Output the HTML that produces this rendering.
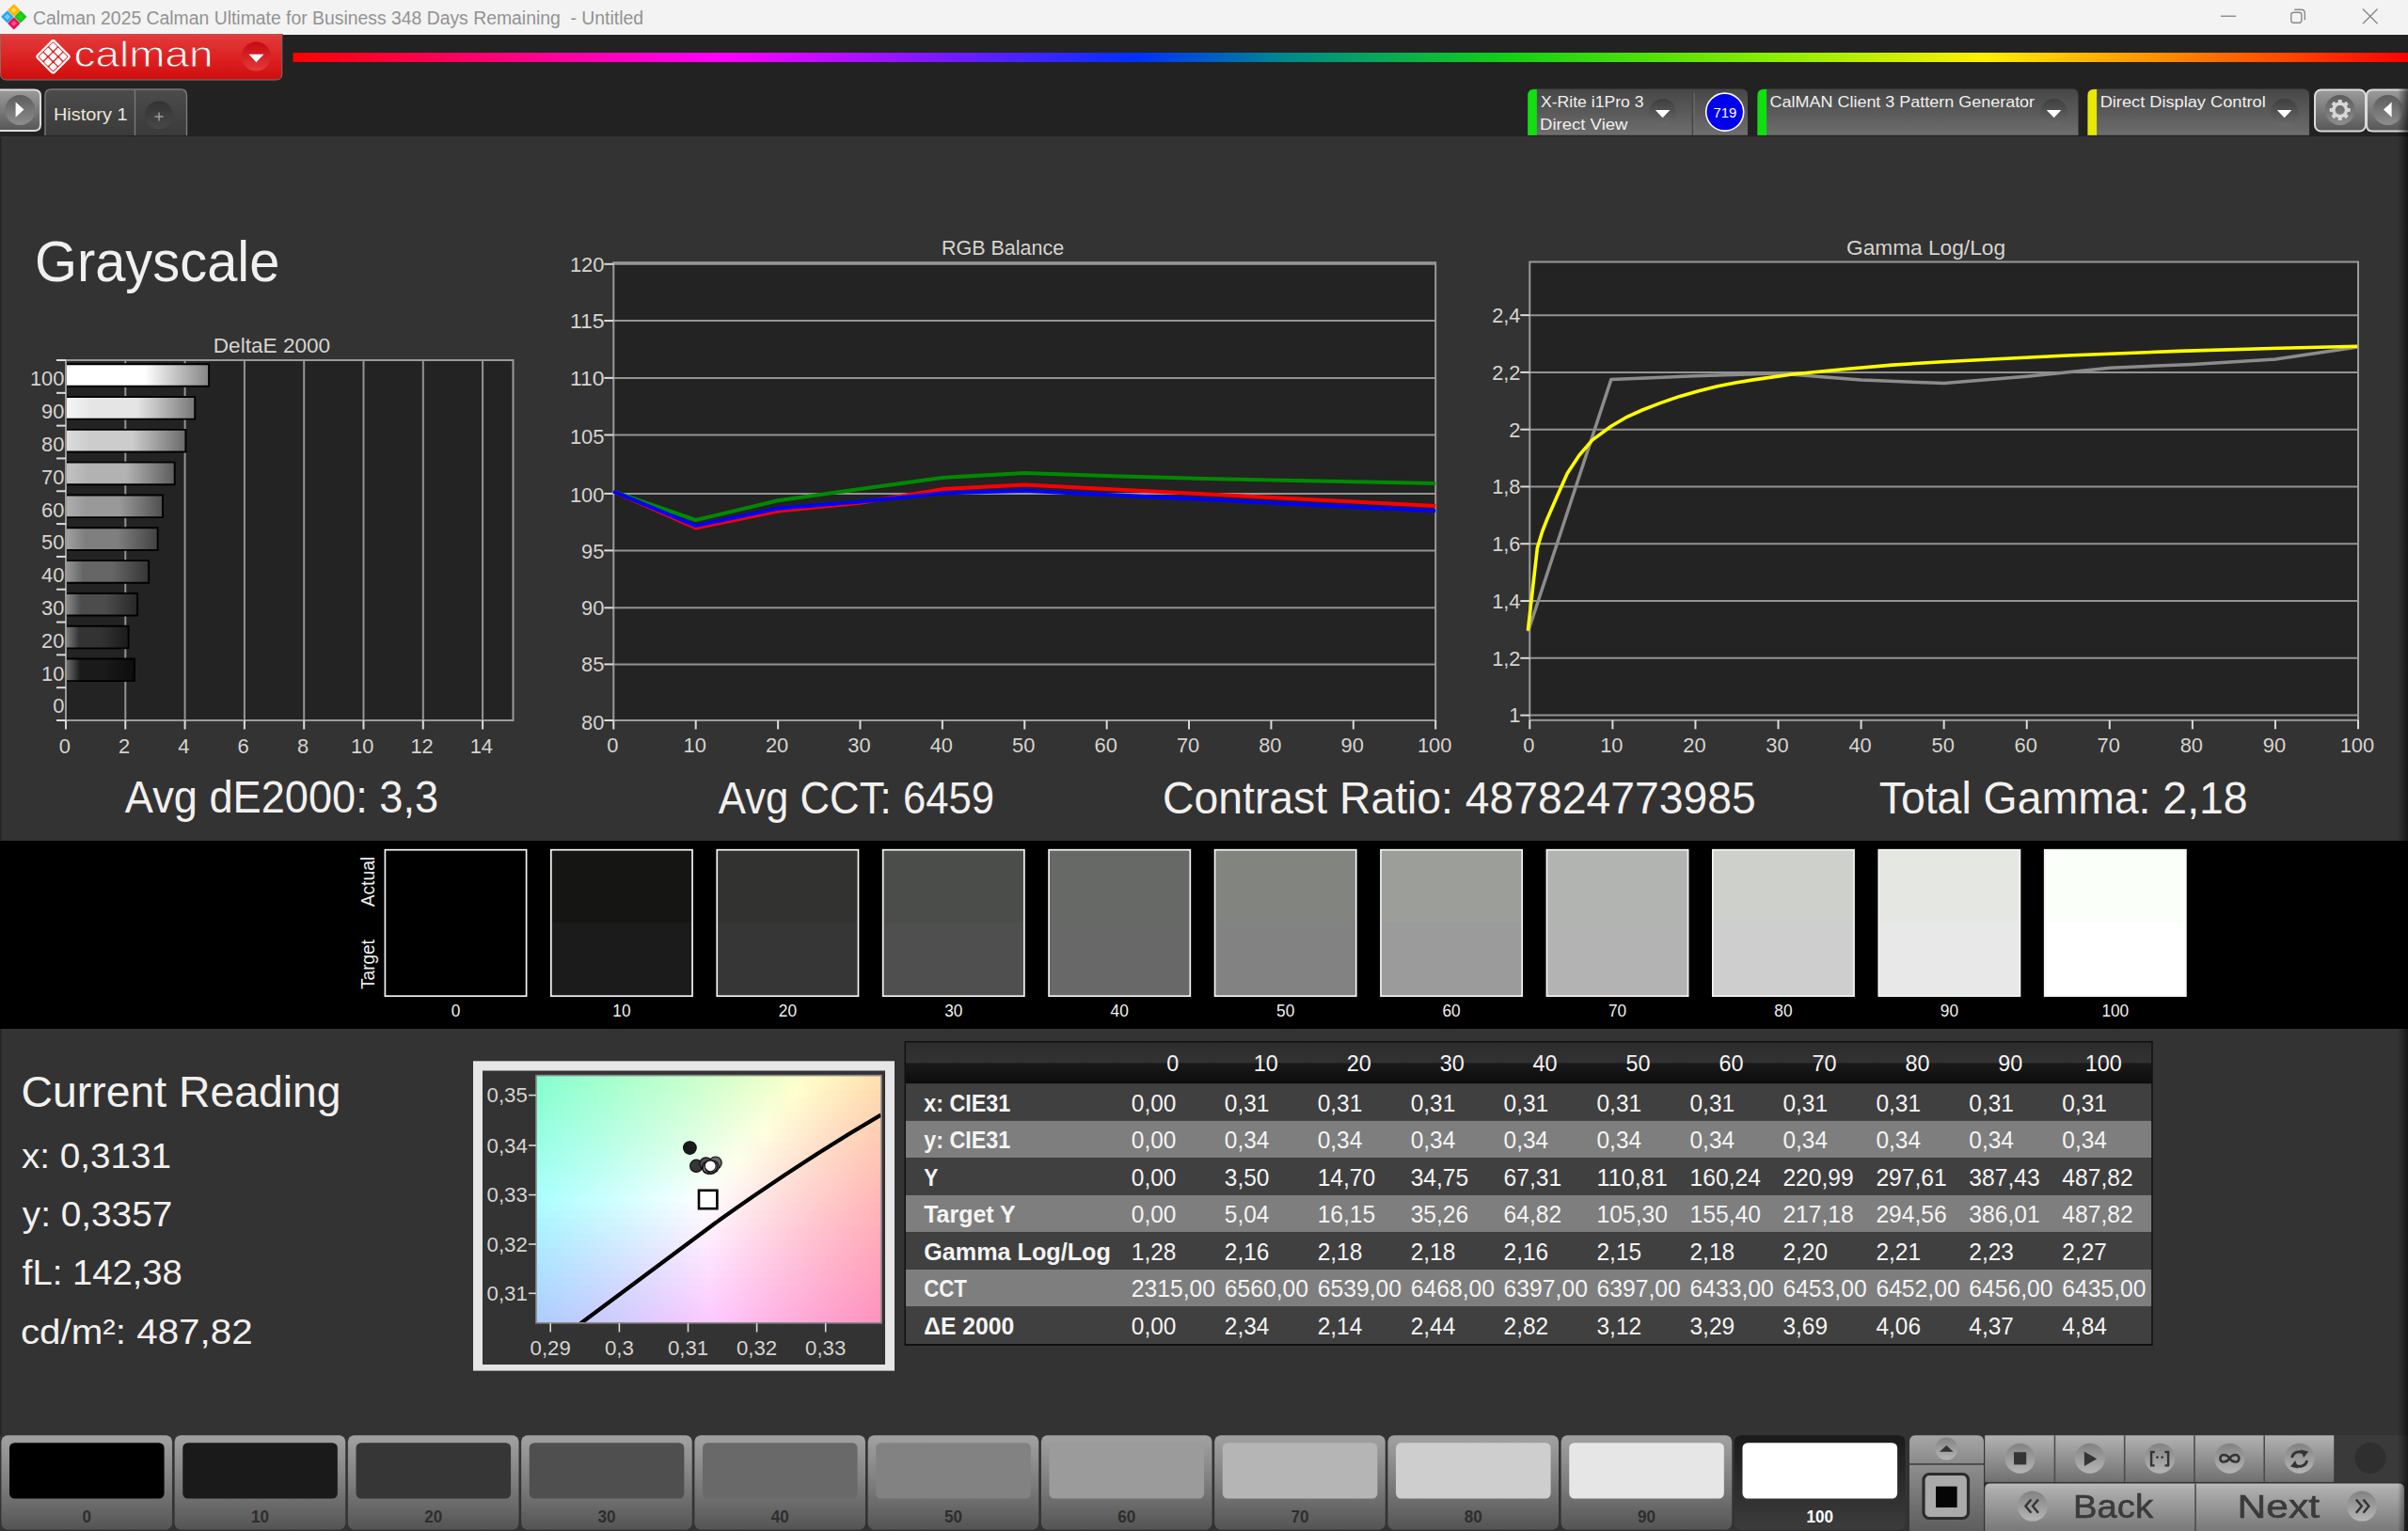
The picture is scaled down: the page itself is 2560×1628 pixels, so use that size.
<!DOCTYPE html>
<html lang="en">
<head>
<meta charset="utf-8">
<title>Calman 2025 Calman Ultimate for Business - Untitled</title>
<style>
html,body{margin:0;padding:0;background:#333;}
body{width:2560px;height:1628px;overflow:hidden;position:relative;font-family:"Liberation Sans",sans-serif;}
#app{position:absolute;left:0;top:0;width:2560px;height:1628px;overflow:hidden;background:#333;}
.sec{position:absolute;left:0;width:2560px;}
#titlebar{top:0;height:37px;background:#f3f3f3;}
#header{top:37px;height:107.9px;background:#222;}
#content{top:144.9px;height:749px;background:#333;}
#strip{top:893.6px;height:200.6px;background:#000;}
#lower{top:1094px;height:534px;background:#333;}
#overlay{position:absolute;left:0;top:0;}
#overlay text{font-family:"Liberation Sans",sans-serif;white-space:pre;}
</style>
</head>
<body>
<div id="app">
<div class="sec" id="titlebar"></div>
<div class="sec" id="header"></div>
<div class="sec" id="content"></div>
<div class="sec" id="strip"></div>
<div class="sec" id="lower"></div>
<svg id="overlay" width="2560" height="1628" viewBox="0 0 2560 1628">
<defs>
<linearGradient id="gRed" x1="0" y1="0" x2="0" y2="1"><stop offset="0" stop-color="#e23b3b"/><stop offset="0.5" stop-color="#dd2222"/><stop offset="1" stop-color="#cf0d0d"/></linearGradient>
<linearGradient id="gRedC" x1="0" y1="0" x2="0" y2="1"><stop offset="0" stop-color="#c40a12"/><stop offset="1" stop-color="#e63a3a"/></linearGradient>
<linearGradient id="gRain" gradientUnits="userSpaceOnUse" x1="311" y1="0" x2="2560" y2="0"><stop offset="0" stop-color="#ff0000"/><stop offset="0.205" stop-color="#ff00ff"/><stop offset="0.399" stop-color="#0030ff"/><stop offset="0.47" stop-color="#008a8a"/><stop offset="0.576" stop-color="#14d014"/><stop offset="0.70" stop-color="#8aee00"/><stop offset="0.80" stop-color="#ffef00"/><stop offset="0.90" stop-color="#ff7a00"/><stop offset="1" stop-color="#ff0000"/></linearGradient>
<linearGradient id="gBtn" x1="0" y1="0" x2="0" y2="1"><stop offset="0" stop-color="#9c9c9c"/><stop offset="1" stop-color="#575757"/></linearGradient>
<linearGradient id="gBtnC" x1="0" y1="0" x2="0" y2="1"><stop offset="0" stop-color="#5c5c5c"/><stop offset="1" stop-color="#8e8e8e"/></linearGradient>
<linearGradient id="gTab" x1="0" y1="0" x2="0" y2="1"><stop offset="0" stop-color="#4c4c4c"/><stop offset="1" stop-color="#3a3a3a"/></linearGradient>
<linearGradient id="gPlusC" x1="0" y1="0" x2="0" y2="1"><stop offset="0" stop-color="#333"/><stop offset="1" stop-color="#484848"/></linearGradient>
<linearGradient id="gPanel" x1="0" y1="0" x2="0" y2="1"><stop offset="0" stop-color="#464646"/><stop offset="1" stop-color="#6e6e6e"/></linearGradient>
<linearGradient id="gDrop" x1="0" y1="0" x2="0" y2="1"><stop offset="0" stop-color="#3e3e3e"/><stop offset="1" stop-color="#6a6a6a"/></linearGradient>
<linearGradient id="gBar100" x1="0" y1="0" x2="1" y2="0"><stop offset="0" stop-color="rgb(255,255,255)"/><stop offset="0.2" stop-color="rgb(255,255,255)"/><stop offset="0.55" stop-color="rgb(255,255,255)"/><stop offset="1" stop-color="rgb(132,132,132)"/></linearGradient>
<linearGradient id="gBar90" x1="0" y1="0" x2="1" y2="0"><stop offset="0" stop-color="rgb(245,245,245)"/><stop offset="0.2" stop-color="rgb(229,229,229)"/><stop offset="0.55" stop-color="rgb(229,229,229)"/><stop offset="1" stop-color="rgb(119,119,119)"/></linearGradient>
<linearGradient id="gBar80" x1="0" y1="0" x2="1" y2="0"><stop offset="0" stop-color="rgb(220,220,220)"/><stop offset="0.2" stop-color="rgb(204,204,204)"/><stop offset="0.55" stop-color="rgb(204,204,204)"/><stop offset="1" stop-color="rgb(106,106,106)"/></linearGradient>
<linearGradient id="gBar70" x1="0" y1="0" x2="1" y2="0"><stop offset="0" stop-color="rgb(194,194,194)"/><stop offset="0.2" stop-color="rgb(178,178,178)"/><stop offset="0.55" stop-color="rgb(178,178,178)"/><stop offset="1" stop-color="rgb(92,92,92)"/></linearGradient>
<linearGradient id="gBar60" x1="0" y1="0" x2="1" y2="0"><stop offset="0" stop-color="rgb(174,174,174)"/><stop offset="0.2" stop-color="rgb(153,153,153)"/><stop offset="0.55" stop-color="rgb(153,153,153)"/><stop offset="1" stop-color="rgb(79,79,79)"/></linearGradient>
<linearGradient id="gBar50" x1="0" y1="0" x2="1" y2="0"><stop offset="0" stop-color="rgb(161,161,161)"/><stop offset="0.2" stop-color="rgb(127,127,127)"/><stop offset="0.55" stop-color="rgb(127,127,127)"/><stop offset="1" stop-color="rgb(66,66,66)"/></linearGradient>
<linearGradient id="gBar40" x1="0" y1="0" x2="1" y2="0"><stop offset="0" stop-color="rgb(149,149,149)"/><stop offset="0.2" stop-color="rgb(102,102,102)"/><stop offset="0.55" stop-color="rgb(102,102,102)"/><stop offset="1" stop-color="rgb(53,53,53)"/></linearGradient>
<linearGradient id="gBar30" x1="0" y1="0" x2="1" y2="0"><stop offset="0" stop-color="rgb(136,136,136)"/><stop offset="0.2" stop-color="rgb(76,76,76)"/><stop offset="0.55" stop-color="rgb(76,76,76)"/><stop offset="1" stop-color="rgb(39,39,39)"/></linearGradient>
<linearGradient id="gBar20" x1="0" y1="0" x2="1" y2="0"><stop offset="0" stop-color="rgb(123,123,123)"/><stop offset="0.2" stop-color="rgb(51,51,51)"/><stop offset="0.55" stop-color="rgb(51,51,51)"/><stop offset="1" stop-color="rgb(26,26,26)"/></linearGradient>
<linearGradient id="gBar10" x1="0" y1="0" x2="1" y2="0"><stop offset="0" stop-color="rgb(111,111,111)"/><stop offset="0.2" stop-color="rgb(26,26,26)"/><stop offset="0.55" stop-color="rgb(26,26,26)"/><stop offset="1" stop-color="rgb(12,12,12)"/></linearGradient>
<clipPath id="cieClip"><rect x="570.0" y="1143.6" width="367.0" height="263.20000000000005"/></clipPath>
<linearGradient id="cr0"><stop offset="0.000" stop-color="#87ffcf"/><stop offset="0.083" stop-color="#92ffce"/><stop offset="0.167" stop-color="#9effce"/><stop offset="0.250" stop-color="#aaffcd"/><stop offset="0.333" stop-color="#b7ffcd"/><stop offset="0.417" stop-color="#c3ffcc"/><stop offset="0.500" stop-color="#d0ffcc"/><stop offset="0.583" stop-color="#ddffcb"/><stop offset="0.667" stop-color="#ebffca"/><stop offset="0.750" stop-color="#f9ffca"/><stop offset="0.833" stop-color="#fff7c3"/><stop offset="0.917" stop-color="#ffebb8"/><stop offset="1.000" stop-color="#ffdfaf"/></linearGradient>
<linearGradient id="cr1"><stop offset="0.000" stop-color="#89ffd1"/><stop offset="0.083" stop-color="#95ffd1"/><stop offset="0.167" stop-color="#a0ffd0"/><stop offset="0.250" stop-color="#adffd0"/><stop offset="0.333" stop-color="#b9ffcf"/><stop offset="0.417" stop-color="#c6ffcf"/><stop offset="0.500" stop-color="#d3ffce"/><stop offset="0.583" stop-color="#e0ffce"/><stop offset="0.667" stop-color="#eeffcd"/><stop offset="0.750" stop-color="#fcffcd"/><stop offset="0.833" stop-color="#fff4c4"/><stop offset="0.917" stop-color="#ffe8b9"/><stop offset="1.000" stop-color="#ffdcaf"/></linearGradient>
<linearGradient id="cr2"><stop offset="0.000" stop-color="#8bffd4"/><stop offset="0.083" stop-color="#97ffd4"/><stop offset="0.167" stop-color="#a3ffd3"/><stop offset="0.250" stop-color="#afffd3"/><stop offset="0.333" stop-color="#bcffd2"/><stop offset="0.417" stop-color="#c8ffd2"/><stop offset="0.500" stop-color="#d6ffd1"/><stop offset="0.583" stop-color="#e3ffd1"/><stop offset="0.667" stop-color="#f1ffd0"/><stop offset="0.750" stop-color="#ffffd0"/><stop offset="0.833" stop-color="#fff1c4"/><stop offset="0.917" stop-color="#ffe5b9"/><stop offset="1.000" stop-color="#ffd9b0"/></linearGradient>
<linearGradient id="cr3"><stop offset="0.000" stop-color="#8dffd7"/><stop offset="0.083" stop-color="#99ffd6"/><stop offset="0.167" stop-color="#a5ffd6"/><stop offset="0.250" stop-color="#b1ffd6"/><stop offset="0.333" stop-color="#beffd5"/><stop offset="0.417" stop-color="#cbffd5"/><stop offset="0.500" stop-color="#d8ffd4"/><stop offset="0.583" stop-color="#e6ffd4"/><stop offset="0.667" stop-color="#f4ffd3"/><stop offset="0.750" stop-color="#fffcd0"/><stop offset="0.833" stop-color="#ffefc5"/><stop offset="0.917" stop-color="#ffe2ba"/><stop offset="1.000" stop-color="#ffd7b0"/></linearGradient>
<linearGradient id="cr4"><stop offset="0.000" stop-color="#8fffda"/><stop offset="0.083" stop-color="#9bffd9"/><stop offset="0.167" stop-color="#a7ffd9"/><stop offset="0.250" stop-color="#b4ffd8"/><stop offset="0.333" stop-color="#c1ffd8"/><stop offset="0.417" stop-color="#ceffd8"/><stop offset="0.500" stop-color="#dbffd7"/><stop offset="0.583" stop-color="#e9ffd7"/><stop offset="0.667" stop-color="#f7ffd6"/><stop offset="0.750" stop-color="#fff9d1"/><stop offset="0.833" stop-color="#ffecc5"/><stop offset="0.917" stop-color="#ffdfbb"/><stop offset="1.000" stop-color="#ffd4b1"/></linearGradient>
<linearGradient id="cr5"><stop offset="0.000" stop-color="#91ffdc"/><stop offset="0.083" stop-color="#9dffdc"/><stop offset="0.167" stop-color="#aaffdc"/><stop offset="0.250" stop-color="#b6ffdb"/><stop offset="0.333" stop-color="#c3ffdb"/><stop offset="0.417" stop-color="#d0ffdb"/><stop offset="0.500" stop-color="#deffda"/><stop offset="0.583" stop-color="#ecffda"/><stop offset="0.667" stop-color="#faffd9"/><stop offset="0.750" stop-color="#fff6d1"/><stop offset="0.833" stop-color="#ffe9c6"/><stop offset="0.917" stop-color="#ffddbb"/><stop offset="1.000" stop-color="#ffd2b1"/></linearGradient>
<linearGradient id="cr6"><stop offset="0.000" stop-color="#93ffdf"/><stop offset="0.083" stop-color="#9fffdf"/><stop offset="0.167" stop-color="#acffdf"/><stop offset="0.250" stop-color="#b9ffde"/><stop offset="0.333" stop-color="#c6ffde"/><stop offset="0.417" stop-color="#d3ffde"/><stop offset="0.500" stop-color="#e1ffdd"/><stop offset="0.583" stop-color="#efffdd"/><stop offset="0.667" stop-color="#fdffdd"/><stop offset="0.750" stop-color="#fff3d2"/><stop offset="0.833" stop-color="#ffe6c6"/><stop offset="0.917" stop-color="#ffdabb"/><stop offset="1.000" stop-color="#ffcfb2"/></linearGradient>
<linearGradient id="cr7"><stop offset="0.000" stop-color="#95ffe2"/><stop offset="0.083" stop-color="#a2ffe2"/><stop offset="0.167" stop-color="#aeffe2"/><stop offset="0.250" stop-color="#bbffe1"/><stop offset="0.333" stop-color="#c8ffe1"/><stop offset="0.417" stop-color="#d6ffe1"/><stop offset="0.500" stop-color="#e4ffe0"/><stop offset="0.583" stop-color="#f2ffe0"/><stop offset="0.667" stop-color="#fffedf"/><stop offset="0.750" stop-color="#fff0d2"/><stop offset="0.833" stop-color="#ffe3c7"/><stop offset="0.917" stop-color="#ffd7bc"/><stop offset="1.000" stop-color="#ffccb2"/></linearGradient>
<linearGradient id="cr8"><stop offset="0.000" stop-color="#97ffe5"/><stop offset="0.083" stop-color="#a4ffe5"/><stop offset="0.167" stop-color="#b1ffe5"/><stop offset="0.250" stop-color="#beffe4"/><stop offset="0.333" stop-color="#cbffe4"/><stop offset="0.417" stop-color="#d9ffe4"/><stop offset="0.500" stop-color="#e7ffe4"/><stop offset="0.583" stop-color="#f5ffe3"/><stop offset="0.667" stop-color="#fffbdf"/><stop offset="0.750" stop-color="#ffedd3"/><stop offset="0.833" stop-color="#ffe0c7"/><stop offset="0.917" stop-color="#ffd5bc"/><stop offset="1.000" stop-color="#ffcab3"/></linearGradient>
<linearGradient id="cr9"><stop offset="0.000" stop-color="#9affe8"/><stop offset="0.083" stop-color="#a6ffe8"/><stop offset="0.167" stop-color="#b3ffe8"/><stop offset="0.250" stop-color="#c0ffe8"/><stop offset="0.333" stop-color="#ceffe7"/><stop offset="0.417" stop-color="#dbffe7"/><stop offset="0.500" stop-color="#eaffe7"/><stop offset="0.583" stop-color="#f8ffe7"/><stop offset="0.667" stop-color="#fff7df"/><stop offset="0.750" stop-color="#ffead3"/><stop offset="0.833" stop-color="#ffddc7"/><stop offset="0.917" stop-color="#ffd2bd"/><stop offset="1.000" stop-color="#ffc7b3"/></linearGradient>
<linearGradient id="cr10"><stop offset="0.000" stop-color="#9cffeb"/><stop offset="0.083" stop-color="#a9ffeb"/><stop offset="0.167" stop-color="#b6ffeb"/><stop offset="0.250" stop-color="#c3ffeb"/><stop offset="0.333" stop-color="#d0ffeb"/><stop offset="0.417" stop-color="#deffea"/><stop offset="0.500" stop-color="#edffea"/><stop offset="0.583" stop-color="#fbffea"/><stop offset="0.667" stop-color="#fff4e0"/><stop offset="0.750" stop-color="#ffe7d3"/><stop offset="0.833" stop-color="#ffdbc8"/><stop offset="0.917" stop-color="#ffcfbd"/><stop offset="1.000" stop-color="#ffc5b4"/></linearGradient>
<linearGradient id="cr11"><stop offset="0.000" stop-color="#9effee"/><stop offset="0.083" stop-color="#abffee"/><stop offset="0.167" stop-color="#b8ffee"/><stop offset="0.250" stop-color="#c6ffee"/><stop offset="0.333" stop-color="#d3ffee"/><stop offset="0.417" stop-color="#e1ffee"/><stop offset="0.500" stop-color="#f0ffed"/><stop offset="0.583" stop-color="#feffed"/><stop offset="0.667" stop-color="#fff1e0"/><stop offset="0.750" stop-color="#ffe4d4"/><stop offset="0.833" stop-color="#ffd8c8"/><stop offset="0.917" stop-color="#ffcdbe"/><stop offset="1.000" stop-color="#ffc3b4"/></linearGradient>
<linearGradient id="cr12"><stop offset="0.000" stop-color="#a1fff2"/><stop offset="0.083" stop-color="#adfff1"/><stop offset="0.167" stop-color="#bbfff1"/><stop offset="0.250" stop-color="#c8fff1"/><stop offset="0.333" stop-color="#d6fff1"/><stop offset="0.417" stop-color="#e4fff1"/><stop offset="0.500" stop-color="#f3fff1"/><stop offset="0.583" stop-color="#fffcee"/><stop offset="0.667" stop-color="#ffeee1"/><stop offset="0.750" stop-color="#ffe1d4"/><stop offset="0.833" stop-color="#ffd5c9"/><stop offset="0.917" stop-color="#ffcabe"/><stop offset="1.000" stop-color="#ffc0b5"/></linearGradient>
<linearGradient id="cr13"><stop offset="0.000" stop-color="#a3fff5"/><stop offset="0.083" stop-color="#b0fff5"/><stop offset="0.167" stop-color="#bdfff5"/><stop offset="0.250" stop-color="#cbfff5"/><stop offset="0.333" stop-color="#d9fff4"/><stop offset="0.417" stop-color="#e7fff4"/><stop offset="0.500" stop-color="#f6fff4"/><stop offset="0.583" stop-color="#fff9ee"/><stop offset="0.667" stop-color="#ffebe1"/><stop offset="0.750" stop-color="#ffded5"/><stop offset="0.833" stop-color="#ffd3c9"/><stop offset="0.917" stop-color="#ffc8bf"/><stop offset="1.000" stop-color="#ffbeb5"/></linearGradient>
<linearGradient id="cr14"><stop offset="0.000" stop-color="#a5fff8"/><stop offset="0.083" stop-color="#b2fff8"/><stop offset="0.167" stop-color="#c0fff8"/><stop offset="0.250" stop-color="#cefff8"/><stop offset="0.333" stop-color="#dcfff8"/><stop offset="0.417" stop-color="#eafff8"/><stop offset="0.500" stop-color="#f9fff8"/><stop offset="0.583" stop-color="#fff6ef"/><stop offset="0.667" stop-color="#ffe8e1"/><stop offset="0.750" stop-color="#ffdbd5"/><stop offset="0.833" stop-color="#ffd0ca"/><stop offset="0.917" stop-color="#ffc5bf"/><stop offset="1.000" stop-color="#ffbbb6"/></linearGradient>
<linearGradient id="cr15"><stop offset="0.000" stop-color="#a8fffb"/><stop offset="0.083" stop-color="#b5fffb"/><stop offset="0.167" stop-color="#c3fffb"/><stop offset="0.250" stop-color="#d1fffb"/><stop offset="0.333" stop-color="#dffffb"/><stop offset="0.417" stop-color="#eefffb"/><stop offset="0.500" stop-color="#fdfffb"/><stop offset="0.583" stop-color="#fff3ef"/><stop offset="0.667" stop-color="#ffe5e2"/><stop offset="0.750" stop-color="#ffd9d5"/><stop offset="0.833" stop-color="#ffcdca"/><stop offset="0.917" stop-color="#ffc3c0"/><stop offset="1.000" stop-color="#ffb9b6"/></linearGradient>
<linearGradient id="cr16"><stop offset="0.000" stop-color="#aaffff"/><stop offset="0.083" stop-color="#b8ffff"/><stop offset="0.167" stop-color="#c5ffff"/><stop offset="0.250" stop-color="#d3ffff"/><stop offset="0.333" stop-color="#e2ffff"/><stop offset="0.417" stop-color="#f1ffff"/><stop offset="0.500" stop-color="#fffefe"/><stop offset="0.583" stop-color="#ffefef"/><stop offset="0.667" stop-color="#ffe2e2"/><stop offset="0.750" stop-color="#ffd6d6"/><stop offset="0.833" stop-color="#ffcbcb"/><stop offset="0.917" stop-color="#ffc0c0"/><stop offset="1.000" stop-color="#ffb7b7"/></linearGradient>
<linearGradient id="cr17"><stop offset="0.000" stop-color="#aafcff"/><stop offset="0.083" stop-color="#b8fcff"/><stop offset="0.167" stop-color="#c6fcff"/><stop offset="0.250" stop-color="#d4fcff"/><stop offset="0.333" stop-color="#e2fcff"/><stop offset="0.417" stop-color="#f1fcff"/><stop offset="0.500" stop-color="#fffbfe"/><stop offset="0.583" stop-color="#ffecf0"/><stop offset="0.667" stop-color="#ffdfe2"/><stop offset="0.750" stop-color="#ffd3d6"/><stop offset="0.833" stop-color="#ffc8cb"/><stop offset="0.917" stop-color="#ffbec1"/><stop offset="1.000" stop-color="#ffb4b7"/></linearGradient>
<linearGradient id="cr18"><stop offset="0.000" stop-color="#abf9ff"/><stop offset="0.083" stop-color="#b8f8ff"/><stop offset="0.167" stop-color="#c6f8ff"/><stop offset="0.250" stop-color="#d4f8ff"/><stop offset="0.333" stop-color="#e2f8ff"/><stop offset="0.417" stop-color="#f1f8ff"/><stop offset="0.500" stop-color="#fff7fe"/><stop offset="0.583" stop-color="#ffe9f0"/><stop offset="0.667" stop-color="#ffdce3"/><stop offset="0.750" stop-color="#ffd0d7"/><stop offset="0.833" stop-color="#ffc5cb"/><stop offset="0.917" stop-color="#ffbbc1"/><stop offset="1.000" stop-color="#ffb2b8"/></linearGradient>
<linearGradient id="cr19"><stop offset="0.000" stop-color="#abf5ff"/><stop offset="0.083" stop-color="#b8f5ff"/><stop offset="0.167" stop-color="#c6f5ff"/><stop offset="0.250" stop-color="#d4f5ff"/><stop offset="0.333" stop-color="#e2f5ff"/><stop offset="0.417" stop-color="#f0f5ff"/><stop offset="0.500" stop-color="#fff4ff"/><stop offset="0.583" stop-color="#ffe6f0"/><stop offset="0.667" stop-color="#ffd9e3"/><stop offset="0.750" stop-color="#ffced7"/><stop offset="0.833" stop-color="#ffc3cc"/><stop offset="0.917" stop-color="#ffb9c2"/><stop offset="1.000" stop-color="#ffb0b8"/></linearGradient>
<linearGradient id="cr20"><stop offset="0.000" stop-color="#abf2ff"/><stop offset="0.083" stop-color="#b8f2ff"/><stop offset="0.167" stop-color="#c6f2ff"/><stop offset="0.250" stop-color="#d4f1ff"/><stop offset="0.333" stop-color="#e2f1ff"/><stop offset="0.417" stop-color="#f0f1ff"/><stop offset="0.500" stop-color="#fff1ff"/><stop offset="0.583" stop-color="#ffe3f1"/><stop offset="0.667" stop-color="#ffd6e3"/><stop offset="0.750" stop-color="#ffcbd7"/><stop offset="0.833" stop-color="#ffc0cc"/><stop offset="0.917" stop-color="#ffb6c2"/><stop offset="1.000" stop-color="#ffadb8"/></linearGradient>
<linearGradient id="cr21"><stop offset="0.000" stop-color="#abefff"/><stop offset="0.083" stop-color="#b8efff"/><stop offset="0.167" stop-color="#c6eeff"/><stop offset="0.250" stop-color="#d4eeff"/><stop offset="0.333" stop-color="#e2eeff"/><stop offset="0.417" stop-color="#f0eeff"/><stop offset="0.500" stop-color="#ffedff"/><stop offset="0.583" stop-color="#ffe0f1"/><stop offset="0.667" stop-color="#ffd4e4"/><stop offset="0.750" stop-color="#ffc8d8"/><stop offset="0.833" stop-color="#ffbecd"/><stop offset="0.917" stop-color="#ffb4c2"/><stop offset="1.000" stop-color="#ffabb9"/></linearGradient>
<linearGradient id="cr22"><stop offset="0.000" stop-color="#acecff"/><stop offset="0.083" stop-color="#b9ebff"/><stop offset="0.167" stop-color="#c6ebff"/><stop offset="0.250" stop-color="#d4ebff"/><stop offset="0.333" stop-color="#e2ebff"/><stop offset="0.417" stop-color="#f0eaff"/><stop offset="0.500" stop-color="#ffeaff"/><stop offset="0.583" stop-color="#ffddf1"/><stop offset="0.667" stop-color="#ffd1e4"/><stop offset="0.750" stop-color="#ffc6d8"/><stop offset="0.833" stop-color="#ffbbcd"/><stop offset="0.917" stop-color="#ffb2c3"/><stop offset="1.000" stop-color="#ffa9b9"/></linearGradient>
<linearGradient id="cr23"><stop offset="0.000" stop-color="#ace8ff"/><stop offset="0.083" stop-color="#b9e8ff"/><stop offset="0.167" stop-color="#c6e8ff"/><stop offset="0.250" stop-color="#d4e8ff"/><stop offset="0.333" stop-color="#e1e7ff"/><stop offset="0.417" stop-color="#f0e7ff"/><stop offset="0.500" stop-color="#fee7ff"/><stop offset="0.583" stop-color="#ffdaf2"/><stop offset="0.667" stop-color="#ffcee5"/><stop offset="0.750" stop-color="#ffc3d9"/><stop offset="0.833" stop-color="#ffb9ce"/><stop offset="0.917" stop-color="#ffafc3"/><stop offset="1.000" stop-color="#ffa6ba"/></linearGradient>
<linearGradient id="cr24"><stop offset="0.000" stop-color="#ace5ff"/><stop offset="0.083" stop-color="#b9e5ff"/><stop offset="0.167" stop-color="#c6e5ff"/><stop offset="0.250" stop-color="#d4e4ff"/><stop offset="0.333" stop-color="#e1e4ff"/><stop offset="0.417" stop-color="#f0e4ff"/><stop offset="0.500" stop-color="#fee3ff"/><stop offset="0.583" stop-color="#ffd7f2"/><stop offset="0.667" stop-color="#ffcbe5"/><stop offset="0.750" stop-color="#ffc0d9"/><stop offset="0.833" stop-color="#ffb6ce"/><stop offset="0.917" stop-color="#ffadc4"/><stop offset="1.000" stop-color="#ffa4ba"/></linearGradient>
<linearGradient id="cr25"><stop offset="0.000" stop-color="#ace2ff"/><stop offset="0.083" stop-color="#b9e2ff"/><stop offset="0.167" stop-color="#c6e1ff"/><stop offset="0.250" stop-color="#d4e1ff"/><stop offset="0.333" stop-color="#e1e1ff"/><stop offset="0.417" stop-color="#efe0ff"/><stop offset="0.500" stop-color="#fee0ff"/><stop offset="0.583" stop-color="#ffd4f2"/><stop offset="0.667" stop-color="#ffc9e5"/><stop offset="0.750" stop-color="#ffbed9"/><stop offset="0.833" stop-color="#ffb4ce"/><stop offset="0.917" stop-color="#ffabc4"/><stop offset="1.000" stop-color="#ffa2bb"/></linearGradient>
<linearGradient id="cr26"><stop offset="0.000" stop-color="#acdfff"/><stop offset="0.083" stop-color="#b9dfff"/><stop offset="0.167" stop-color="#c6deff"/><stop offset="0.250" stop-color="#d4deff"/><stop offset="0.333" stop-color="#e1ddff"/><stop offset="0.417" stop-color="#efddff"/><stop offset="0.500" stop-color="#feddff"/><stop offset="0.583" stop-color="#ffd1f2"/><stop offset="0.667" stop-color="#ffc6e6"/><stop offset="0.750" stop-color="#ffbbda"/><stop offset="0.833" stop-color="#ffb1cf"/><stop offset="0.917" stop-color="#ffa8c5"/><stop offset="1.000" stop-color="#ffa0bb"/></linearGradient>
<linearGradient id="cr27"><stop offset="0.000" stop-color="#addcff"/><stop offset="0.083" stop-color="#b9dcff"/><stop offset="0.167" stop-color="#c6dbff"/><stop offset="0.250" stop-color="#d4dbff"/><stop offset="0.333" stop-color="#e1daff"/><stop offset="0.417" stop-color="#efdaff"/><stop offset="0.500" stop-color="#fdd9ff"/><stop offset="0.583" stop-color="#ffcef3"/><stop offset="0.667" stop-color="#ffc3e6"/><stop offset="0.750" stop-color="#ffb9da"/><stop offset="0.833" stop-color="#ffafcf"/><stop offset="0.917" stop-color="#ffa6c5"/><stop offset="1.000" stop-color="#ff9ebc"/></linearGradient>
<linearGradient id="cr28"><stop offset="0.000" stop-color="#add9ff"/><stop offset="0.083" stop-color="#b9d9ff"/><stop offset="0.167" stop-color="#c6d8ff"/><stop offset="0.250" stop-color="#d4d8ff"/><stop offset="0.333" stop-color="#e1d7ff"/><stop offset="0.417" stop-color="#efd7ff"/><stop offset="0.500" stop-color="#fdd6ff"/><stop offset="0.583" stop-color="#ffccf3"/><stop offset="0.667" stop-color="#ffc0e6"/><stop offset="0.750" stop-color="#ffb6da"/><stop offset="0.833" stop-color="#ffadd0"/><stop offset="0.917" stop-color="#ffa4c5"/><stop offset="1.000" stop-color="#ff9bbc"/></linearGradient>
<linearGradient id="cr29"><stop offset="0.000" stop-color="#add6ff"/><stop offset="0.083" stop-color="#b9d6ff"/><stop offset="0.167" stop-color="#c6d5ff"/><stop offset="0.250" stop-color="#d3d5ff"/><stop offset="0.333" stop-color="#e1d4ff"/><stop offset="0.417" stop-color="#efd4ff"/><stop offset="0.500" stop-color="#fdd3ff"/><stop offset="0.583" stop-color="#ffc9f3"/><stop offset="0.667" stop-color="#ffbee7"/><stop offset="0.750" stop-color="#ffb4db"/><stop offset="0.833" stop-color="#ffaad0"/><stop offset="0.917" stop-color="#ffa1c6"/><stop offset="1.000" stop-color="#ff99bc"/></linearGradient>
<linearGradient id="cr30"><stop offset="0.000" stop-color="#add3ff"/><stop offset="0.083" stop-color="#bad3ff"/><stop offset="0.167" stop-color="#c6d2ff"/><stop offset="0.250" stop-color="#d3d2ff"/><stop offset="0.333" stop-color="#e1d1ff"/><stop offset="0.417" stop-color="#efd0ff"/><stop offset="0.500" stop-color="#fdd0ff"/><stop offset="0.583" stop-color="#ffc6f4"/><stop offset="0.667" stop-color="#ffbbe7"/><stop offset="0.750" stop-color="#ffb1db"/><stop offset="0.833" stop-color="#ffa8d0"/><stop offset="0.917" stop-color="#ff9fc6"/><stop offset="1.000" stop-color="#ff97bd"/></linearGradient>
<linearGradient id="cr31"><stop offset="0.000" stop-color="#add0ff"/><stop offset="0.083" stop-color="#bad0ff"/><stop offset="0.167" stop-color="#c6cfff"/><stop offset="0.250" stop-color="#d3cfff"/><stop offset="0.333" stop-color="#e1ceff"/><stop offset="0.417" stop-color="#eecdff"/><stop offset="0.500" stop-color="#fccdff"/><stop offset="0.583" stop-color="#ffc3f4"/><stop offset="0.667" stop-color="#ffb9e7"/><stop offset="0.750" stop-color="#ffafdb"/><stop offset="0.833" stop-color="#ffa5d1"/><stop offset="0.917" stop-color="#ff9dc7"/><stop offset="1.000" stop-color="#ff95bd"/></linearGradient>
<linearGradient id="cr32"><stop offset="0.000" stop-color="#adcdff"/><stop offset="0.083" stop-color="#bacdff"/><stop offset="0.167" stop-color="#c7ccff"/><stop offset="0.250" stop-color="#d3ccff"/><stop offset="0.333" stop-color="#e1cbff"/><stop offset="0.417" stop-color="#eecaff"/><stop offset="0.500" stop-color="#fccaff"/><stop offset="0.583" stop-color="#ffc0f4"/><stop offset="0.667" stop-color="#ffb6e7"/><stop offset="0.750" stop-color="#ffacdc"/><stop offset="0.833" stop-color="#ffa3d1"/><stop offset="0.917" stop-color="#ff9bc7"/><stop offset="1.000" stop-color="#ff93be"/></linearGradient>
<linearGradient id="gHead" x1="0" y1="0" x2="0" y2="1"><stop offset="0" stop-color="#2c2c2c"/><stop offset="0.49" stop-color="#323232"/><stop offset="0.51" stop-color="#1a1a1a"/><stop offset="1" stop-color="#0c0c0c"/></linearGradient>
<linearGradient id="gFoot" x1="0" y1="0" x2="0" y2="1"><stop offset="0" stop-color="#a2a2a2"/><stop offset="0.5" stop-color="#7e7e7e"/><stop offset="1" stop-color="#545454"/></linearGradient>
<linearGradient id="gFootSel" x1="0" y1="0" x2="0" y2="1"><stop offset="0" stop-color="#1a1a1a"/><stop offset="1" stop-color="#3c3c3c"/></linearGradient>
<linearGradient id="gTool" x1="0" y1="0" x2="0" y2="1"><stop offset="0" stop-color="#b2b2b2"/><stop offset="1" stop-color="#707070"/></linearGradient>
<linearGradient id="gToolC" x1="0" y1="0" x2="0" y2="1"><stop offset="0" stop-color="#828282"/><stop offset="1" stop-color="#b6b6b6"/></linearGradient>
<linearGradient id="gNav" x1="0" y1="0" x2="0" y2="1"><stop offset="0" stop-color="#bcbcbc"/><stop offset="0.12" stop-color="#adadad"/><stop offset="1" stop-color="#767676"/></linearGradient>
<linearGradient id="gLP1" x1="0" y1="0" x2="0" y2="1"><stop offset="0" stop-color="#a6a6a6"/><stop offset="1" stop-color="#8a8a8a"/></linearGradient>
<linearGradient id="gLP2" x1="0" y1="0" x2="0" y2="1"><stop offset="0" stop-color="#8e8e8e"/><stop offset="1" stop-color="#5c5c5c"/></linearGradient>
<filter id="fSoft" x="-10%" y="-20%" width="120%" height="140%"><feGaussianBlur stdDeviation="0.7"/></filter>
<linearGradient id="gEdge" x1="0" y1="0" x2="1" y2="0"><stop offset="0" stop-color="#000" stop-opacity="0"/><stop offset="1" stop-color="#000" stop-opacity="0.55"/></linearGradient>
<linearGradient id="gEdgeL" x1="0" y1="0" x2="1" y2="0"><stop offset="0" stop-color="#000" stop-opacity="0.4"/><stop offset="1" stop-color="#000" stop-opacity="0"/></linearGradient>
</defs>
<path d="M14.80 5.40 L20.30 10.90 L14.80 16.40 L9.30 10.90 Z" fill="#ffb400" stroke="#ffb400" stroke-width="1.8" stroke-linejoin="round"/>
<path d="M14.80 7.70 L18.00 10.90 L14.80 14.10 L11.60 10.90 Z" fill="#ffd84a" />
<path d="M7.80 12.40 L13.30 17.90 L7.80 23.40 L2.30 17.90 Z" fill="#2aa8f5" stroke="#2aa8f5" stroke-width="1.8" stroke-linejoin="round"/>
<path d="M7.80 14.70 L11.00 17.90 L7.80 21.10 L4.60 17.90 Z" fill="#6fd0ff" />
<path d="M21.80 12.40 L27.30 17.90 L21.80 23.40 L16.30 17.90 Z" fill="#1fc41f" stroke="#1fc41f" stroke-width="1.8" stroke-linejoin="round"/>
<path d="M21.80 14.70 L25.00 17.90 L21.80 21.10 L18.60 17.90 Z" fill="#12e012" />
<path d="M14.80 19.40 L20.30 24.90 L14.80 30.40 L9.30 24.90 Z" fill="#e6125a" stroke="#e6125a" stroke-width="1.8" stroke-linejoin="round"/>
<path d="M14.80 21.70 L18.00 24.90 L14.80 28.10 L11.60 24.90 Z" fill="#ff4d88" />
<text x="35.0" y="26.1" font-size="19.77" fill="#929292" textLength="649.0" lengthAdjust="spacingAndGlyphs">Calman 2025 Calman Ultimate for Business 348 Days Remaining  - Untitled</text>
<path d="M2361 17.2 H2377" stroke="#8a8a8a" stroke-width="1.4" fill="none"/>
<rect x="2435.8" y="13.2" width="11" height="11" rx="2.4" fill="none" stroke="#8a8a8a" stroke-width="1.4"/>
<path d="M2439.3 10.2 H2446.5 Q2450.3 10.2 2450.3 14 V21.2" fill="none" stroke="#8a8a8a" stroke-width="1.4"/>
<path d="M2512 9.6 L2527.6 25.2 M2527.6 9.6 L2512 25.2" stroke="#8a8a8a" stroke-width="1.4" fill="none"/>
<path d="M0.5 37 H299.8 V78.5 Q299.8 85 293.3 85 H7 Q0.5 85 0.5 78.5 Z" fill="url(#gRed)" stroke="#8a6a6a" stroke-width="1"/>
<rect x="0" y="36" width="301" height="1.6" fill="#d94545"/>
<g transform="translate(56.5 60.3) rotate(45)"><rect x="-12.7" y="-12.7" width="25.4" height="25.4" rx="2.5" fill="none" stroke="#fff" stroke-width="2.2"/><rect x="-10.75" y="-10.75" width="6.3" height="6.3" rx="1" fill="#fff"/><rect x="-10.75" y="-3.15" width="6.3" height="6.3" rx="1" fill="#fff"/><rect x="-10.75" y="4.45" width="6.3" height="6.3" rx="1" fill="#fff"/><rect x="-3.15" y="-10.75" width="6.3" height="6.3" rx="1" fill="#fff"/><rect x="-3.15" y="-3.15" width="6.3" height="6.3" rx="1" fill="#fff"/><rect x="-3.15" y="4.45" width="6.3" height="6.3" rx="1" fill="#fff"/><rect x="4.45" y="-10.75" width="6.3" height="6.3" rx="1" fill="#fff"/><rect x="4.45" y="-3.15" width="6.3" height="6.3" rx="1" fill="#fff"/><rect x="4.45" y="4.45" width="6.3" height="6.3" rx="1" fill="#fff"/></g>
<text x="78.6" y="71.3" font-size="38.20" fill="#ffffff" textLength="148.0" lengthAdjust="spacingAndGlyphs" stroke="#dc2424" stroke-width="0.9">calman</text>
<circle cx="272.4" cy="60" r="15.5" fill="url(#gRedC)"/>
<path d="M264.6 57.8 H280.4 L272.5 66.2 Z" fill="#fff"/>
<rect x="311.50" y="56.00" width="2248.50" height="10.00" fill="url(#gRain)" />
<path d="M-2 95.5 H36.5 Q43 95.5 43 102 V132.5 Q43 139 36.5 139 H-2 Z" fill="url(#gBtn)" stroke="#dcdcdc" stroke-width="2"/>
<circle cx="21.3" cy="117" r="16" fill="url(#gBtnC)"/>
<path d="M16.6 108.4 L25.4 116.6 L16.6 124.8 Z" fill="#fff"/>
<path d="M48 144 V101.5 Q48 95 54.5 95 H192 Q198.5 95 198.5 101.5 V144 Z" fill="url(#gTab)"/>
<path d="M48 144 V101.5 Q48 95 54.5 95 H192 Q198.5 95 198.5 101.5 V144" fill="none" stroke="#7a7a7a" stroke-width="1.4"/>
<line x1="143.50" y1="95.50" x2="143.50" y2="144.00" stroke="#7a7a7a" stroke-width="1.4" />
<text x="57.0" y="128.1" font-size="18.90" fill="#ece6da" textLength="78.5" lengthAdjust="spacingAndGlyphs">History 1</text>
<circle cx="169" cy="122.4" r="15" fill="url(#gPlusC)"/>
<path d="M164.6 124 H173.6 M169.1 119.5 V128.5" stroke="#a0a0a0" stroke-width="1.4" fill="none"/>
<path d="M1624.3 143.8 V101 Q1624.3 94.5 1630.8 94.5 H1851.5 Q1858 94.5 1858 101 V143.8 Z" fill="url(#gPanel)"/>
<path d="M1624.3 143.8 V101.5 Q1624.3 95 1630.8 95 H1633.8999999999999 V143.8 Z" fill="#10e010"/>
<text x="1638.0" y="114.0" font-size="17.15" fill="#f0f0f0" textLength="109.5" lengthAdjust="spacingAndGlyphs">X-Rite i1Pro 3</text>
<text x="1637.0" y="137.9" font-size="17.15" fill="#f0f0f0" textLength="93.5" lengthAdjust="spacingAndGlyphs">Direct View</text>
<circle cx="1767.6" cy="119.6" r="14.5" fill="url(#gDrop)"/>
<path d="M1759.8 117.0 H1775.3999999999999 L1767.6 125.19999999999999 Z" fill="#fff"/>
<line x1="1799.50" y1="99.00" x2="1799.50" y2="143.80" stroke="#444" stroke-width="1.6" />
<line x1="1801.00" y1="99.00" x2="1801.00" y2="143.80" stroke="#747474" stroke-width="1" />
<circle cx="1833.7" cy="119.1" r="20" fill="#0000ee" stroke="#fff" stroke-width="1.6"/>
<text x="1821.5" y="124.7" font-size="14.24" fill="#fff" textLength="24.8" lengthAdjust="spacingAndGlyphs">719</text>
<path d="M1868.5 143.8 V101 Q1868.5 94.5 1875.0 94.5 H2203.0 Q2209.5 94.5 2209.5 101 V143.8 Z" fill="url(#gPanel)"/>
<path d="M1868.5 143.8 V101.5 Q1868.5 95 1875.0 95 H1878.1 V143.8 Z" fill="#10e010"/>
<text x="1881.6" y="114.0" font-size="17.15" fill="#f0f0f0" textLength="281.5" lengthAdjust="spacingAndGlyphs">CalMAN Client 3 Pattern Generator</text>
<circle cx="2183.6" cy="119.6" r="14.5" fill="url(#gDrop)"/>
<path d="M2175.7999999999997 117.0 H2191.4 L2183.6 125.19999999999999 Z" fill="#fff"/>
<path d="M2219.5 143.8 V101 Q2219.5 94.5 2226.0 94.5 H2448.5 Q2455 94.5 2455 101 V143.8 Z" fill="url(#gPanel)"/>
<path d="M2219.5 143.8 V101.5 Q2219.5 95 2226.0 95 H2229.1 V143.8 Z" fill="#e8e800"/>
<text x="2232.7" y="114.0" font-size="17.15" fill="#f0f0f0" textLength="176.0" lengthAdjust="spacingAndGlyphs">Direct Display Control</text>
<circle cx="2428.6" cy="119.6" r="14.5" fill="url(#gDrop)"/>
<path d="M2420.7999999999997 117.0 H2436.4 L2428.6 125.19999999999999 Z" fill="#fff"/>
<rect x="2461" y="95.5" width="54" height="44" rx="6.5" fill="url(#gBtn)" stroke="#dcdcdc" stroke-width="2"/>
<circle cx="2487.7" cy="117" r="16" fill="url(#gBtnC)"/>
<g transform="translate(2487.7 117)" fill="#d8d8d8"><rect x="-2.1" y="-11" width="4.2" height="5" rx="0.8" transform="rotate(0)"/><rect x="-2.1" y="-11" width="4.2" height="5" rx="0.8" transform="rotate(45)"/><rect x="-2.1" y="-11" width="4.2" height="5" rx="0.8" transform="rotate(90)"/><rect x="-2.1" y="-11" width="4.2" height="5" rx="0.8" transform="rotate(135)"/><rect x="-2.1" y="-11" width="4.2" height="5" rx="0.8" transform="rotate(180)"/><rect x="-2.1" y="-11" width="4.2" height="5" rx="0.8" transform="rotate(225)"/><rect x="-2.1" y="-11" width="4.2" height="5" rx="0.8" transform="rotate(270)"/><rect x="-2.1" y="-11" width="4.2" height="5" rx="0.8" transform="rotate(315)"/><circle r="6.8" fill="none" stroke="#d8d8d8" stroke-width="3.4"/></g>
<path d="M2562 95.5 H2522.5 Q2516 95.5 2516 102 V133 Q2516 139.5 2522.5 139.5 H2562 Z" fill="url(#gBtn)" stroke="#dcdcdc" stroke-width="2"/>
<circle cx="2538.5" cy="117" r="16" fill="url(#gBtnC)"/>
<path d="M2542.6 108.6 L2534 116.6 L2542.6 124.6 Z" fill="#fff"/>
<text x="36.9" y="298.6" font-size="61.92" fill="#f2f0ee" textLength="260.5" lengthAdjust="spacingAndGlyphs">Grayscale</text>
<rect x="70.00" y="383.00" width="475.50" height="383.00" fill="#232323" />
<text x="226.8" y="374.9" font-size="22.67" fill="#d6d4d0" textLength="124.4" lengthAdjust="spacingAndGlyphs">DeltaE 2000</text>
<line x1="133.30" y1="383.00" x2="133.30" y2="766.00" stroke="#949494" stroke-width="2.0" />
<line x1="196.60" y1="383.00" x2="196.60" y2="766.00" stroke="#949494" stroke-width="2.0" />
<line x1="259.90" y1="383.00" x2="259.90" y2="766.00" stroke="#949494" stroke-width="2.0" />
<line x1="323.20" y1="383.00" x2="323.20" y2="766.00" stroke="#949494" stroke-width="2.0" />
<line x1="386.50" y1="383.00" x2="386.50" y2="766.00" stroke="#949494" stroke-width="2.0" />
<line x1="449.80" y1="383.00" x2="449.80" y2="766.00" stroke="#949494" stroke-width="2.0" />
<line x1="513.10" y1="383.00" x2="513.10" y2="766.00" stroke="#949494" stroke-width="2.0" />
<rect x="70.0" y="383.0" width="475.5" height="383.0" fill="none" stroke="#9a9a9a" stroke-width="2"/>
<line x1="60.00" y1="383.00" x2="70.00" y2="383.00" stroke="#dcdcdc" stroke-width="2.0" />
<text x="31.9" y="410.2" font-size="22.53" fill="#d6d4d0" textLength="36.5" lengthAdjust="spacingAndGlyphs">100</text>
<rect x="71.00" y="387.21" width="151.09" height="23.6" fill="url(#gBar100)"/>
<path d="M71.00 387.21 H222.09 V410.81 H71.00" fill="none" stroke="#000" stroke-width="1.9"/>
<line x1="60.00" y1="417.82" x2="70.00" y2="417.82" stroke="#dcdcdc" stroke-width="2.0" />
<text x="44.1" y="445.0" font-size="22.53" fill="#d6d4d0" textLength="24.3" lengthAdjust="spacingAndGlyphs">90</text>
<rect x="71.00" y="422.03" width="136.21" height="23.6" fill="url(#gBar90)"/>
<path d="M71.00 422.03 H207.21 V445.63 H71.00" fill="none" stroke="#000" stroke-width="1.9"/>
<line x1="60.00" y1="452.64" x2="70.00" y2="452.64" stroke="#dcdcdc" stroke-width="2.0" />
<text x="44.1" y="479.8" font-size="22.53" fill="#d6d4d0" textLength="24.3" lengthAdjust="spacingAndGlyphs">80</text>
<rect x="71.00" y="456.85" width="126.40" height="23.6" fill="url(#gBar80)"/>
<path d="M71.00 456.85 H197.40 V480.45 H71.00" fill="none" stroke="#000" stroke-width="1.9"/>
<line x1="60.00" y1="487.45" x2="70.00" y2="487.45" stroke="#dcdcdc" stroke-width="2.0" />
<text x="44.1" y="514.7" font-size="22.53" fill="#d6d4d0" textLength="24.3" lengthAdjust="spacingAndGlyphs">70</text>
<rect x="71.00" y="491.66" width="114.69" height="23.6" fill="url(#gBar70)"/>
<path d="M71.00 491.66 H185.69 V515.26 H71.00" fill="none" stroke="#000" stroke-width="1.9"/>
<line x1="60.00" y1="522.27" x2="70.00" y2="522.27" stroke="#dcdcdc" stroke-width="2.0" />
<text x="44.1" y="549.5" font-size="22.53" fill="#d6d4d0" textLength="24.3" lengthAdjust="spacingAndGlyphs">60</text>
<rect x="71.00" y="526.48" width="102.03" height="23.6" fill="url(#gBar60)"/>
<path d="M71.00 526.48 H173.03 V550.08 H71.00" fill="none" stroke="#000" stroke-width="1.9"/>
<line x1="60.00" y1="557.09" x2="70.00" y2="557.09" stroke="#dcdcdc" stroke-width="2.0" />
<text x="44.1" y="584.3" font-size="22.53" fill="#d6d4d0" textLength="24.3" lengthAdjust="spacingAndGlyphs">50</text>
<rect x="71.00" y="561.30" width="96.65" height="23.6" fill="url(#gBar50)"/>
<path d="M71.00 561.30 H167.65 V584.90 H71.00" fill="none" stroke="#000" stroke-width="1.9"/>
<line x1="60.00" y1="591.91" x2="70.00" y2="591.91" stroke="#dcdcdc" stroke-width="2.0" />
<text x="44.1" y="619.1" font-size="22.53" fill="#d6d4d0" textLength="24.3" lengthAdjust="spacingAndGlyphs">40</text>
<rect x="71.00" y="596.12" width="87.15" height="23.6" fill="url(#gBar40)"/>
<path d="M71.00 596.12 H158.15 V619.72 H71.00" fill="none" stroke="#000" stroke-width="1.9"/>
<line x1="60.00" y1="626.73" x2="70.00" y2="626.73" stroke="#dcdcdc" stroke-width="2.0" />
<text x="44.1" y="653.9" font-size="22.53" fill="#d6d4d0" textLength="24.3" lengthAdjust="spacingAndGlyphs">30</text>
<rect x="71.00" y="630.94" width="75.13" height="23.6" fill="url(#gBar30)"/>
<path d="M71.00 630.94 H146.13 V654.54 H71.00" fill="none" stroke="#000" stroke-width="1.9"/>
<line x1="60.00" y1="661.55" x2="70.00" y2="661.55" stroke="#dcdcdc" stroke-width="2.0" />
<text x="44.1" y="688.8" font-size="22.53" fill="#d6d4d0" textLength="24.3" lengthAdjust="spacingAndGlyphs">20</text>
<rect x="71.00" y="665.75" width="65.63" height="23.6" fill="url(#gBar20)"/>
<path d="M71.00 665.75 H136.63 V689.35 H71.00" fill="none" stroke="#000" stroke-width="1.9"/>
<line x1="60.00" y1="696.36" x2="70.00" y2="696.36" stroke="#dcdcdc" stroke-width="2.0" />
<text x="44.1" y="723.6" font-size="22.53" fill="#d6d4d0" textLength="24.3" lengthAdjust="spacingAndGlyphs">10</text>
<rect x="71.00" y="700.57" width="71.96" height="23.6" fill="url(#gBar10)"/>
<path d="M71.00 700.57 H142.96 V724.17 H71.00" fill="none" stroke="#000" stroke-width="1.9"/>
<line x1="60.00" y1="731.18" x2="70.00" y2="731.18" stroke="#dcdcdc" stroke-width="2.0" />
<text x="56.2" y="758.4" font-size="22.53" fill="#d6d4d0" textLength="12.2" lengthAdjust="spacingAndGlyphs">0</text>
<line x1="60.00" y1="766.00" x2="70.00" y2="766.00" stroke="#dcdcdc" stroke-width="2.0" />
<line x1="70.00" y1="766.00" x2="70.00" y2="775.50" stroke="#dcdcdc" stroke-width="2.0" />
<text x="62.7" y="800.5" font-size="22.53" fill="#d6d4d0" textLength="12.2" lengthAdjust="spacingAndGlyphs">0</text>
<line x1="133.30" y1="766.00" x2="133.30" y2="775.50" stroke="#dcdcdc" stroke-width="2.0" />
<text x="126.0" y="800.5" font-size="22.53" fill="#d6d4d0" textLength="12.2" lengthAdjust="spacingAndGlyphs">2</text>
<line x1="196.60" y1="766.00" x2="196.60" y2="775.50" stroke="#dcdcdc" stroke-width="2.0" />
<text x="189.3" y="800.5" font-size="22.53" fill="#d6d4d0" textLength="12.2" lengthAdjust="spacingAndGlyphs">4</text>
<line x1="259.90" y1="766.00" x2="259.90" y2="775.50" stroke="#dcdcdc" stroke-width="2.0" />
<text x="252.6" y="800.5" font-size="22.53" fill="#d6d4d0" textLength="12.2" lengthAdjust="spacingAndGlyphs">6</text>
<line x1="323.20" y1="766.00" x2="323.20" y2="775.50" stroke="#dcdcdc" stroke-width="2.0" />
<text x="315.9" y="800.5" font-size="22.53" fill="#d6d4d0" textLength="12.2" lengthAdjust="spacingAndGlyphs">8</text>
<line x1="386.50" y1="766.00" x2="386.50" y2="775.50" stroke="#dcdcdc" stroke-width="2.0" />
<text x="373.1" y="800.5" font-size="22.53" fill="#d6d4d0" textLength="24.3" lengthAdjust="spacingAndGlyphs">10</text>
<line x1="449.80" y1="766.00" x2="449.80" y2="775.50" stroke="#dcdcdc" stroke-width="2.0" />
<text x="436.4" y="800.5" font-size="22.53" fill="#d6d4d0" textLength="24.3" lengthAdjust="spacingAndGlyphs">12</text>
<line x1="513.10" y1="766.00" x2="513.10" y2="775.50" stroke="#dcdcdc" stroke-width="2.0" />
<text x="499.7" y="800.5" font-size="22.53" fill="#d6d4d0" textLength="24.3" lengthAdjust="spacingAndGlyphs">14</text>
<rect x="652.30" y="279.20" width="873.90" height="486.80" fill="#232323" />
<text x="1001.0" y="270.7" font-size="22.53" fill="#d6d4d0" textLength="130.2" lengthAdjust="spacingAndGlyphs">RGB Balance</text>
<line x1="652.30" y1="706.40" x2="1526.20" y2="706.40" stroke="#949494" stroke-width="2.0" />
<line x1="652.30" y1="646.30" x2="1526.20" y2="646.30" stroke="#949494" stroke-width="2.0" />
<line x1="652.30" y1="585.40" x2="1526.20" y2="585.40" stroke="#949494" stroke-width="2.0" />
<line x1="652.30" y1="524.90" x2="1526.20" y2="524.90" stroke="#949494" stroke-width="2.0" />
<line x1="652.30" y1="462.50" x2="1526.20" y2="462.50" stroke="#949494" stroke-width="2.0" />
<line x1="652.30" y1="401.90" x2="1526.20" y2="401.90" stroke="#949494" stroke-width="2.0" />
<line x1="652.30" y1="341.05" x2="1526.20" y2="341.05" stroke="#949494" stroke-width="2.0" />
<rect x="652.3" y="279.2" width="873.9000000000001" height="486.8" fill="none" stroke="#9a9a9a" stroke-width="2"/>
<line x1="652.30" y1="280.80" x2="1526.20" y2="280.80" stroke="#949494" stroke-width="2.0" />
<line x1="642.30" y1="766.00" x2="652.30" y2="766.00" stroke="#dcdcdc" stroke-width="2.0" />
<text x="618.1" y="776.3" font-size="22.53" fill="#d6d4d0" textLength="24.3" lengthAdjust="spacingAndGlyphs">80</text>
<line x1="642.30" y1="706.40" x2="652.30" y2="706.40" stroke="#dcdcdc" stroke-width="2.0" />
<text x="618.1" y="714.4" font-size="22.53" fill="#d6d4d0" textLength="24.3" lengthAdjust="spacingAndGlyphs">85</text>
<line x1="642.30" y1="646.30" x2="652.30" y2="646.30" stroke="#dcdcdc" stroke-width="2.0" />
<text x="618.1" y="653.6" font-size="22.53" fill="#d6d4d0" textLength="24.3" lengthAdjust="spacingAndGlyphs">90</text>
<line x1="642.30" y1="585.40" x2="652.30" y2="585.40" stroke="#dcdcdc" stroke-width="2.0" />
<text x="618.1" y="593.8" font-size="22.53" fill="#d6d4d0" textLength="24.3" lengthAdjust="spacingAndGlyphs">95</text>
<line x1="642.30" y1="524.90" x2="652.30" y2="524.90" stroke="#dcdcdc" stroke-width="2.0" />
<text x="605.9" y="533.5" font-size="22.53" fill="#d6d4d0" textLength="36.5" lengthAdjust="spacingAndGlyphs">100</text>
<line x1="642.30" y1="462.50" x2="652.30" y2="462.50" stroke="#dcdcdc" stroke-width="2.0" />
<text x="605.9" y="472.4" font-size="22.53" fill="#d6d4d0" textLength="36.5" lengthAdjust="spacingAndGlyphs">105</text>
<line x1="642.30" y1="401.90" x2="652.30" y2="401.90" stroke="#dcdcdc" stroke-width="2.0" />
<text x="605.9" y="410.1" font-size="22.53" fill="#d6d4d0" textLength="36.5" lengthAdjust="spacingAndGlyphs">110</text>
<line x1="642.30" y1="341.05" x2="652.30" y2="341.05" stroke="#dcdcdc" stroke-width="2.0" />
<text x="605.9" y="349.4" font-size="22.53" fill="#d6d4d0" textLength="36.5" lengthAdjust="spacingAndGlyphs">115</text>
<line x1="642.30" y1="280.80" x2="652.30" y2="280.80" stroke="#dcdcdc" stroke-width="2.0" />
<text x="605.9" y="288.7" font-size="22.53" fill="#d6d4d0" textLength="36.5" lengthAdjust="spacingAndGlyphs">120</text>
<line x1="652.30" y1="766.00" x2="652.30" y2="775.50" stroke="#dcdcdc" stroke-width="2.0" />
<text x="645.2" y="800.0" font-size="22.53" fill="#d6d4d0" textLength="12.2" lengthAdjust="spacingAndGlyphs">0</text>
<line x1="739.69" y1="766.00" x2="739.69" y2="775.50" stroke="#dcdcdc" stroke-width="2.0" />
<text x="726.5" y="800.0" font-size="22.53" fill="#d6d4d0" textLength="24.3" lengthAdjust="spacingAndGlyphs">10</text>
<line x1="827.08" y1="766.00" x2="827.08" y2="775.50" stroke="#dcdcdc" stroke-width="2.0" />
<text x="813.9" y="800.0" font-size="22.53" fill="#d6d4d0" textLength="24.3" lengthAdjust="spacingAndGlyphs">20</text>
<line x1="914.47" y1="766.00" x2="914.47" y2="775.50" stroke="#dcdcdc" stroke-width="2.0" />
<text x="901.3" y="800.0" font-size="22.53" fill="#d6d4d0" textLength="24.3" lengthAdjust="spacingAndGlyphs">30</text>
<line x1="1001.86" y1="766.00" x2="1001.86" y2="775.50" stroke="#dcdcdc" stroke-width="2.0" />
<text x="988.7" y="800.0" font-size="22.53" fill="#d6d4d0" textLength="24.3" lengthAdjust="spacingAndGlyphs">40</text>
<line x1="1089.25" y1="766.00" x2="1089.25" y2="775.50" stroke="#dcdcdc" stroke-width="2.0" />
<text x="1076.1" y="800.0" font-size="22.53" fill="#d6d4d0" textLength="24.3" lengthAdjust="spacingAndGlyphs">50</text>
<line x1="1176.64" y1="766.00" x2="1176.64" y2="775.50" stroke="#dcdcdc" stroke-width="2.0" />
<text x="1163.5" y="800.0" font-size="22.53" fill="#d6d4d0" textLength="24.3" lengthAdjust="spacingAndGlyphs">60</text>
<line x1="1264.03" y1="766.00" x2="1264.03" y2="775.50" stroke="#dcdcdc" stroke-width="2.0" />
<text x="1250.9" y="800.0" font-size="22.53" fill="#d6d4d0" textLength="24.3" lengthAdjust="spacingAndGlyphs">70</text>
<line x1="1351.42" y1="766.00" x2="1351.42" y2="775.50" stroke="#dcdcdc" stroke-width="2.0" />
<text x="1338.2" y="800.0" font-size="22.53" fill="#d6d4d0" textLength="24.3" lengthAdjust="spacingAndGlyphs">80</text>
<line x1="1438.81" y1="766.00" x2="1438.81" y2="775.50" stroke="#dcdcdc" stroke-width="2.0" />
<text x="1425.6" y="800.0" font-size="22.53" fill="#d6d4d0" textLength="24.3" lengthAdjust="spacingAndGlyphs">90</text>
<line x1="1526.20" y1="766.00" x2="1526.20" y2="775.50" stroke="#dcdcdc" stroke-width="2.0" />
<text x="1506.9" y="800.0" font-size="22.53" fill="#d6d4d0" textLength="36.5" lengthAdjust="spacingAndGlyphs">100</text>
<polyline points="652.3,522.6 739.7,561.5 827.1,543.6 914.5,534.7 1001.9,520.1 1089.2,515.5 1176.6,520.1 1264.0,524.4 1351.4,528.9 1438.8,533.5 1526.2,537.9" fill="none" stroke="#ff0000" stroke-width="4" stroke-linejoin="round"/>
<polyline points="652.3,522.6 739.7,553.0 827.1,532.3 914.5,520.1 1001.9,507.9 1089.2,503.1 1176.6,506.1 1264.0,508.6 1351.4,510.4 1438.8,512.2 1526.2,514.0" fill="none" stroke="#008a00" stroke-width="4" stroke-linejoin="round"/>
<polyline points="652.3,522.6 739.7,559.1 827.1,540.8 914.5,533.5 1001.9,524.4 1089.2,521.7 1176.6,526.0 1264.0,530.2 1351.4,534.7 1438.8,539.0 1526.2,543.3" fill="none" stroke="#0000ff" stroke-width="4" stroke-linejoin="round"/>
<rect x="1626.30" y="278.50" width="880.70" height="487.30" fill="#232323" />
<text x="1963.0" y="270.7" font-size="22.53" fill="#d6d4d0" textLength="169.0" lengthAdjust="spacingAndGlyphs">Gamma Log/Log</text>
<line x1="1626.30" y1="760.60" x2="2507.00" y2="760.60" stroke="#949494" stroke-width="2.0" />
<line x1="1626.30" y1="699.82" x2="2507.00" y2="699.82" stroke="#949494" stroke-width="2.0" />
<line x1="1626.30" y1="639.04" x2="2507.00" y2="639.04" stroke="#949494" stroke-width="2.0" />
<line x1="1626.30" y1="578.26" x2="2507.00" y2="578.26" stroke="#949494" stroke-width="2.0" />
<line x1="1626.30" y1="517.48" x2="2507.00" y2="517.48" stroke="#949494" stroke-width="2.0" />
<line x1="1626.30" y1="456.70" x2="2507.00" y2="456.70" stroke="#949494" stroke-width="2.0" />
<line x1="1626.30" y1="395.92" x2="2507.00" y2="395.92" stroke="#949494" stroke-width="2.0" />
<line x1="1626.30" y1="335.14" x2="2507.00" y2="335.14" stroke="#949494" stroke-width="2.0" />
<rect x="1626.3" y="278.5" width="880.7" height="487.29999999999995" fill="none" stroke="#9a9a9a" stroke-width="2"/>
<line x1="1616.30" y1="760.60" x2="1626.30" y2="760.60" stroke="#dcdcdc" stroke-width="2.0" />
<text x="1604.3" y="768.4" font-size="22.53" fill="#d6d4d0" textLength="12.2" lengthAdjust="spacingAndGlyphs">1</text>
<line x1="1616.30" y1="699.82" x2="1626.30" y2="699.82" stroke="#dcdcdc" stroke-width="2.0" />
<text x="1586.2" y="707.6" font-size="22.53" fill="#d6d4d0" textLength="30.3" lengthAdjust="spacingAndGlyphs">1,2</text>
<line x1="1616.30" y1="639.04" x2="1626.30" y2="639.04" stroke="#dcdcdc" stroke-width="2.0" />
<text x="1586.2" y="646.8" font-size="22.53" fill="#d6d4d0" textLength="30.3" lengthAdjust="spacingAndGlyphs">1,4</text>
<line x1="1616.30" y1="578.26" x2="1626.30" y2="578.26" stroke="#dcdcdc" stroke-width="2.0" />
<text x="1586.2" y="586.1" font-size="22.53" fill="#d6d4d0" textLength="30.3" lengthAdjust="spacingAndGlyphs">1,6</text>
<line x1="1616.30" y1="517.48" x2="1626.30" y2="517.48" stroke="#dcdcdc" stroke-width="2.0" />
<text x="1586.2" y="525.3" font-size="22.53" fill="#d6d4d0" textLength="30.3" lengthAdjust="spacingAndGlyphs">1,8</text>
<line x1="1616.30" y1="456.70" x2="1626.30" y2="456.70" stroke="#dcdcdc" stroke-width="2.0" />
<text x="1604.3" y="464.5" font-size="22.53" fill="#d6d4d0" textLength="12.2" lengthAdjust="spacingAndGlyphs">2</text>
<line x1="1616.30" y1="395.92" x2="1626.30" y2="395.92" stroke="#dcdcdc" stroke-width="2.0" />
<text x="1586.2" y="403.7" font-size="22.53" fill="#d6d4d0" textLength="30.3" lengthAdjust="spacingAndGlyphs">2,2</text>
<line x1="1616.30" y1="335.14" x2="1626.30" y2="335.14" stroke="#dcdcdc" stroke-width="2.0" />
<text x="1586.2" y="342.9" font-size="22.53" fill="#d6d4d0" textLength="30.3" lengthAdjust="spacingAndGlyphs">2,4</text>
<line x1="1626.30" y1="765.80" x2="1626.30" y2="775.30" stroke="#dcdcdc" stroke-width="2.0" />
<text x="1619.2" y="800.0" font-size="22.53" fill="#d6d4d0" textLength="12.2" lengthAdjust="spacingAndGlyphs">0</text>
<line x1="1714.37" y1="765.80" x2="1714.37" y2="775.30" stroke="#dcdcdc" stroke-width="2.0" />
<text x="1701.2" y="800.0" font-size="22.53" fill="#d6d4d0" textLength="24.3" lengthAdjust="spacingAndGlyphs">10</text>
<line x1="1802.44" y1="765.80" x2="1802.44" y2="775.30" stroke="#dcdcdc" stroke-width="2.0" />
<text x="1789.3" y="800.0" font-size="22.53" fill="#d6d4d0" textLength="24.3" lengthAdjust="spacingAndGlyphs">20</text>
<line x1="1890.51" y1="765.80" x2="1890.51" y2="775.30" stroke="#dcdcdc" stroke-width="2.0" />
<text x="1877.3" y="800.0" font-size="22.53" fill="#d6d4d0" textLength="24.3" lengthAdjust="spacingAndGlyphs">30</text>
<line x1="1978.58" y1="765.80" x2="1978.58" y2="775.30" stroke="#dcdcdc" stroke-width="2.0" />
<text x="1965.4" y="800.0" font-size="22.53" fill="#d6d4d0" textLength="24.3" lengthAdjust="spacingAndGlyphs">40</text>
<line x1="2066.65" y1="765.80" x2="2066.65" y2="775.30" stroke="#dcdcdc" stroke-width="2.0" />
<text x="2053.5" y="800.0" font-size="22.53" fill="#d6d4d0" textLength="24.3" lengthAdjust="spacingAndGlyphs">50</text>
<line x1="2154.72" y1="765.80" x2="2154.72" y2="775.30" stroke="#dcdcdc" stroke-width="2.0" />
<text x="2141.6" y="800.0" font-size="22.53" fill="#d6d4d0" textLength="24.3" lengthAdjust="spacingAndGlyphs">60</text>
<line x1="2242.79" y1="765.80" x2="2242.79" y2="775.30" stroke="#dcdcdc" stroke-width="2.0" />
<text x="2229.6" y="800.0" font-size="22.53" fill="#d6d4d0" textLength="24.3" lengthAdjust="spacingAndGlyphs">70</text>
<line x1="2330.86" y1="765.80" x2="2330.86" y2="775.30" stroke="#dcdcdc" stroke-width="2.0" />
<text x="2317.7" y="800.0" font-size="22.53" fill="#d6d4d0" textLength="24.3" lengthAdjust="spacingAndGlyphs">80</text>
<line x1="2418.93" y1="765.80" x2="2418.93" y2="775.30" stroke="#dcdcdc" stroke-width="2.0" />
<text x="2405.8" y="800.0" font-size="22.53" fill="#d6d4d0" textLength="24.3" lengthAdjust="spacingAndGlyphs">90</text>
<line x1="2507.00" y1="765.80" x2="2507.00" y2="775.30" stroke="#dcdcdc" stroke-width="2.0" />
<text x="2487.7" y="800.0" font-size="22.53" fill="#d6d4d0" textLength="36.5" lengthAdjust="spacingAndGlyphs">100</text>
<polyline points="1624.6,671.5 1712.8,403.6 1802.4,399.8 1890.4,397.0 1978.5,404.1 2066.6,407.5 2154.7,400.3 2242.8,391.2 2330.9,387.4 2419.0,382.0 2506.5,369.0" fill="none" stroke="#8c8c8c" stroke-width="3.5" stroke-linejoin="round"/>
<polyline points="1624.4,670.5 1629.6,624.9 1634.4,582.4 1639.7,565.0 1645.0,551.5 1655.7,527.0 1666.3,503.2 1679.0,484.0 1692.9,467.9 1712.8,453.3 1728.0,444.2 1746.0,436.0 1765.0,428.6 1785.9,421.4 1805.0,415.9 1825.8,410.7 1845.0,407.0 1865.7,403.6 1905.5,398.0 1958.7,392.7 2011.8,388.1 2065.0,384.7 2118.1,382.0 2197.9,378.0 2315.6,373.4 2423.3,370.3 2506.3,368.2" fill="none" stroke="#ffff00" stroke-width="3.6" stroke-linejoin="round"/>
<text x="132.8" y="864.3" font-size="47.53" fill="#f2f0ee" textLength="333.4" lengthAdjust="spacingAndGlyphs">Avg dE2000: 3,3</text>
<text x="763.8" y="864.5" font-size="47.53" fill="#f2f0ee" textLength="293.4" lengthAdjust="spacingAndGlyphs">Avg CCT: 6459</text>
<text x="1236.1" y="864.5" font-size="47.53" fill="#f2f0ee" textLength="630.7" lengthAdjust="spacingAndGlyphs">Contrast Ratio: 487824773985</text>
<text x="1997.7" y="864.5" font-size="47.53" fill="#f2f0ee" textLength="392.0" lengthAdjust="spacingAndGlyphs">Total Gamma: 2,18</text>
<rect x="409.40" y="903.70" width="150.20" height="77.30" fill="#000000" shape-rendering="crispEdges"/>
<rect x="409.40" y="981.00" width="150.20" height="78.20" fill="#000000" shape-rendering="crispEdges"/>
<rect x="409.40" y="903.7" width="150.2" height="155.5" fill="none" stroke="#f4f4f4" stroke-width="1.7"/>
<text x="479.7" y="1081.3" font-size="18.02" fill="#f0f0f0" textLength="9.6" lengthAdjust="spacingAndGlyphs">0</text>
<rect x="585.83" y="903.70" width="150.20" height="77.30" fill="#151614" shape-rendering="crispEdges"/>
<rect x="585.83" y="981.00" width="150.20" height="78.20" fill="#1b1b1b" shape-rendering="crispEdges"/>
<rect x="585.83" y="903.7" width="150.2" height="155.5" fill="none" stroke="#f4f4f4" stroke-width="1.7"/>
<text x="651.3" y="1081.3" font-size="18.02" fill="#f0f0f0" textLength="19.2" lengthAdjust="spacingAndGlyphs">10</text>
<rect x="762.26" y="903.70" width="150.20" height="77.30" fill="#323331" shape-rendering="crispEdges"/>
<rect x="762.26" y="981.00" width="150.20" height="78.20" fill="#363636" shape-rendering="crispEdges"/>
<rect x="762.26" y="903.7" width="150.2" height="155.5" fill="none" stroke="#f4f4f4" stroke-width="1.7"/>
<text x="827.8" y="1081.3" font-size="18.02" fill="#f0f0f0" textLength="19.2" lengthAdjust="spacingAndGlyphs">20</text>
<rect x="938.69" y="903.70" width="150.20" height="77.30" fill="#4b4d4a" shape-rendering="crispEdges"/>
<rect x="938.69" y="981.00" width="150.20" height="78.20" fill="#4f4f4f" shape-rendering="crispEdges"/>
<rect x="938.69" y="903.7" width="150.2" height="155.5" fill="none" stroke="#f4f4f4" stroke-width="1.7"/>
<text x="1004.2" y="1081.3" font-size="18.02" fill="#f0f0f0" textLength="19.2" lengthAdjust="spacingAndGlyphs">30</text>
<rect x="1115.12" y="903.70" width="150.20" height="77.30" fill="#676966" shape-rendering="crispEdges"/>
<rect x="1115.12" y="981.00" width="150.20" height="78.20" fill="#686868" shape-rendering="crispEdges"/>
<rect x="1115.12" y="903.7" width="150.2" height="155.5" fill="none" stroke="#f4f4f4" stroke-width="1.7"/>
<text x="1180.6" y="1081.3" font-size="18.02" fill="#f0f0f0" textLength="19.2" lengthAdjust="spacingAndGlyphs">40</text>
<rect x="1291.55" y="903.70" width="150.20" height="77.30" fill="#828480" shape-rendering="crispEdges"/>
<rect x="1291.55" y="981.00" width="150.20" height="78.20" fill="#828282" shape-rendering="crispEdges"/>
<rect x="1291.55" y="903.7" width="150.2" height="155.5" fill="none" stroke="#f4f4f4" stroke-width="1.7"/>
<text x="1357.1" y="1081.3" font-size="18.02" fill="#f0f0f0" textLength="19.2" lengthAdjust="spacingAndGlyphs">50</text>
<rect x="1467.98" y="903.70" width="150.20" height="77.30" fill="#9c9e9a" shape-rendering="crispEdges"/>
<rect x="1467.98" y="981.00" width="150.20" height="78.20" fill="#9b9b9b" shape-rendering="crispEdges"/>
<rect x="1467.98" y="903.7" width="150.2" height="155.5" fill="none" stroke="#f4f4f4" stroke-width="1.7"/>
<text x="1533.5" y="1081.3" font-size="18.02" fill="#f0f0f0" textLength="19.2" lengthAdjust="spacingAndGlyphs">60</text>
<rect x="1644.41" y="903.70" width="150.20" height="77.30" fill="#b1b4b0" shape-rendering="crispEdges"/>
<rect x="1644.41" y="981.00" width="150.20" height="78.20" fill="#b3b3b3" shape-rendering="crispEdges"/>
<rect x="1644.41" y="903.7" width="150.2" height="155.5" fill="none" stroke="#f4f4f4" stroke-width="1.7"/>
<text x="1709.9" y="1081.3" font-size="18.02" fill="#f0f0f0" textLength="19.2" lengthAdjust="spacingAndGlyphs">70</text>
<rect x="1820.84" y="903.70" width="150.20" height="77.30" fill="#cdd0cb" shape-rendering="crispEdges"/>
<rect x="1820.84" y="981.00" width="150.20" height="78.20" fill="#cecece" shape-rendering="crispEdges"/>
<rect x="1820.84" y="903.7" width="150.2" height="155.5" fill="none" stroke="#f4f4f4" stroke-width="1.7"/>
<text x="1886.3" y="1081.3" font-size="18.02" fill="#f0f0f0" textLength="19.2" lengthAdjust="spacingAndGlyphs">80</text>
<rect x="1997.27" y="903.70" width="150.20" height="77.30" fill="#e4e7e2" shape-rendering="crispEdges"/>
<rect x="1997.27" y="981.00" width="150.20" height="78.20" fill="#e8e8e8" shape-rendering="crispEdges"/>
<rect x="1997.27" y="903.7" width="150.2" height="155.5" fill="none" stroke="#f4f4f4" stroke-width="1.7"/>
<text x="2062.8" y="1081.3" font-size="18.02" fill="#f0f0f0" textLength="19.2" lengthAdjust="spacingAndGlyphs">90</text>
<rect x="2173.70" y="903.70" width="150.20" height="77.30" fill="#fafffa" shape-rendering="crispEdges"/>
<rect x="2173.70" y="981.00" width="150.20" height="78.20" fill="#ffffff" shape-rendering="crispEdges"/>
<rect x="2173.70" y="903.7" width="150.2" height="155.5" fill="none" stroke="#f4f4f4" stroke-width="1.7"/>
<text x="2234.4" y="1081.3" font-size="18.02" fill="#f0f0f0" textLength="28.8" lengthAdjust="spacingAndGlyphs">100</text>
<g transform="translate(397.8 964.3) rotate(-90)"><text x="0" y="0" font-size="20.4" fill="#f0f0f0" textLength="53.4" lengthAdjust="spacingAndGlyphs">Actual</text></g>
<g transform="translate(397.8 1051.9) rotate(-90)"><text x="0" y="0" font-size="20.4" fill="#f0f0f0" textLength="52.8" lengthAdjust="spacingAndGlyphs">Target</text></g>
<text x="22.6" y="1177.3" font-size="46.80" fill="#f2f0ee" textLength="340.0" lengthAdjust="spacingAndGlyphs">Current Reading</text>
<text x="22.9" y="1241.5" font-size="37.50" fill="#f2f0ee" textLength="159.0" lengthAdjust="spacingAndGlyphs">x: 0,3131</text>
<text x="23.8" y="1304.0" font-size="37.50" fill="#f2f0ee" textLength="159.5" lengthAdjust="spacingAndGlyphs">y: 0,3357</text>
<text x="23.8" y="1366.4" font-size="37.50" fill="#f2f0ee" textLength="170.0" lengthAdjust="spacingAndGlyphs">fL: 142,38</text>
<text x="21.9" y="1428.9" font-size="37.50" fill="#f2f0ee" textLength="246.8" lengthAdjust="spacingAndGlyphs">cd/m²: 487,82</text>
<rect x="503.00" y="1128.30" width="448.00" height="329.30" fill="#e6e6e6" />
<rect x="513.00" y="1138.50" width="428.00" height="312.50" fill="#333333" />
<g clip-path="url(#cieClip)">
<rect x="570.0" y="1143" width="367.0" height="8" fill="url(#cr0)" shape-rendering="crispEdges"/>
<rect x="570.0" y="1151" width="367.0" height="8" fill="url(#cr1)" shape-rendering="crispEdges"/>
<rect x="570.0" y="1159" width="367.0" height="8" fill="url(#cr2)" shape-rendering="crispEdges"/>
<rect x="570.0" y="1167" width="367.0" height="8" fill="url(#cr3)" shape-rendering="crispEdges"/>
<rect x="570.0" y="1175" width="367.0" height="8" fill="url(#cr4)" shape-rendering="crispEdges"/>
<rect x="570.0" y="1183" width="367.0" height="8" fill="url(#cr5)" shape-rendering="crispEdges"/>
<rect x="570.0" y="1191" width="367.0" height="8" fill="url(#cr6)" shape-rendering="crispEdges"/>
<rect x="570.0" y="1199" width="367.0" height="8" fill="url(#cr7)" shape-rendering="crispEdges"/>
<rect x="570.0" y="1207" width="367.0" height="8" fill="url(#cr8)" shape-rendering="crispEdges"/>
<rect x="570.0" y="1215" width="367.0" height="8" fill="url(#cr9)" shape-rendering="crispEdges"/>
<rect x="570.0" y="1223" width="367.0" height="8" fill="url(#cr10)" shape-rendering="crispEdges"/>
<rect x="570.0" y="1231" width="367.0" height="8" fill="url(#cr11)" shape-rendering="crispEdges"/>
<rect x="570.0" y="1239" width="367.0" height="8" fill="url(#cr12)" shape-rendering="crispEdges"/>
<rect x="570.0" y="1247" width="367.0" height="8" fill="url(#cr13)" shape-rendering="crispEdges"/>
<rect x="570.0" y="1255" width="367.0" height="8" fill="url(#cr14)" shape-rendering="crispEdges"/>
<rect x="570.0" y="1263" width="367.0" height="8" fill="url(#cr15)" shape-rendering="crispEdges"/>
<rect x="570.0" y="1271" width="367.0" height="8" fill="url(#cr16)" shape-rendering="crispEdges"/>
<rect x="570.0" y="1279" width="367.0" height="8" fill="url(#cr17)" shape-rendering="crispEdges"/>
<rect x="570.0" y="1287" width="367.0" height="8" fill="url(#cr18)" shape-rendering="crispEdges"/>
<rect x="570.0" y="1295" width="367.0" height="8" fill="url(#cr19)" shape-rendering="crispEdges"/>
<rect x="570.0" y="1303" width="367.0" height="8" fill="url(#cr20)" shape-rendering="crispEdges"/>
<rect x="570.0" y="1311" width="367.0" height="8" fill="url(#cr21)" shape-rendering="crispEdges"/>
<rect x="570.0" y="1319" width="367.0" height="8" fill="url(#cr22)" shape-rendering="crispEdges"/>
<rect x="570.0" y="1327" width="367.0" height="8" fill="url(#cr23)" shape-rendering="crispEdges"/>
<rect x="570.0" y="1335" width="367.0" height="8" fill="url(#cr24)" shape-rendering="crispEdges"/>
<rect x="570.0" y="1343" width="367.0" height="8" fill="url(#cr25)" shape-rendering="crispEdges"/>
<rect x="570.0" y="1351" width="367.0" height="8" fill="url(#cr26)" shape-rendering="crispEdges"/>
<rect x="570.0" y="1359" width="367.0" height="8" fill="url(#cr27)" shape-rendering="crispEdges"/>
<rect x="570.0" y="1367" width="367.0" height="8" fill="url(#cr28)" shape-rendering="crispEdges"/>
<rect x="570.0" y="1375" width="367.0" height="8" fill="url(#cr29)" shape-rendering="crispEdges"/>
<rect x="570.0" y="1383" width="367.0" height="8" fill="url(#cr30)" shape-rendering="crispEdges"/>
<rect x="570.0" y="1391" width="367.0" height="8" fill="url(#cr31)" shape-rendering="crispEdges"/>
<rect x="570.0" y="1399" width="367.0" height="8" fill="url(#cr32)" shape-rendering="crispEdges"/>
<path d="M617 1407.5 Q700 1346 760.5 1300.5 Q850 1236 936.5 1185.5" fill="none" stroke="#000" stroke-width="4.2"/>
</g>
<rect x="570.0" y="1143.6" width="367.0" height="263.20000000000005" fill="none" stroke="#8a8a8a" stroke-width="1.6"/>
<line x1="562.00" y1="1164.60" x2="570.00" y2="1164.60" stroke="#d8d8d8" stroke-width="1.6" />
<text x="517.6" y="1172.2" font-size="21.22" fill="#d6d4d0" textLength="43.2" lengthAdjust="spacingAndGlyphs">0,35</text>
<line x1="562.00" y1="1218.00" x2="570.00" y2="1218.00" stroke="#d8d8d8" stroke-width="1.6" />
<text x="517.6" y="1225.6" font-size="21.22" fill="#d6d4d0" textLength="43.2" lengthAdjust="spacingAndGlyphs">0,34</text>
<line x1="562.00" y1="1270.60" x2="570.00" y2="1270.60" stroke="#d8d8d8" stroke-width="1.6" />
<text x="517.6" y="1278.2" font-size="21.22" fill="#d6d4d0" textLength="43.2" lengthAdjust="spacingAndGlyphs">0,33</text>
<line x1="562.00" y1="1323.00" x2="570.00" y2="1323.00" stroke="#d8d8d8" stroke-width="1.6" />
<text x="517.6" y="1330.6" font-size="21.22" fill="#d6d4d0" textLength="43.2" lengthAdjust="spacingAndGlyphs">0,32</text>
<line x1="562.00" y1="1375.30" x2="570.00" y2="1375.30" stroke="#d8d8d8" stroke-width="1.6" />
<text x="517.6" y="1382.9" font-size="21.22" fill="#d6d4d0" textLength="43.2" lengthAdjust="spacingAndGlyphs">0,31</text>
<line x1="585.20" y1="1407.00" x2="585.20" y2="1416.50" stroke="#d8d8d8" stroke-width="1.6" />
<text x="563.6" y="1441.0" font-size="21.22" fill="#d6d4d0" textLength="43.2" lengthAdjust="spacingAndGlyphs">0,29</text>
<line x1="658.40" y1="1407.00" x2="658.40" y2="1416.50" stroke="#d8d8d8" stroke-width="1.6" />
<text x="642.9" y="1441.0" font-size="21.22" fill="#d6d4d0" textLength="31.0" lengthAdjust="spacingAndGlyphs">0,3</text>
<line x1="731.50" y1="1407.00" x2="731.50" y2="1416.50" stroke="#d8d8d8" stroke-width="1.6" />
<text x="709.9" y="1441.0" font-size="21.22" fill="#d6d4d0" textLength="43.2" lengthAdjust="spacingAndGlyphs">0,31</text>
<line x1="804.60" y1="1407.00" x2="804.60" y2="1416.50" stroke="#d8d8d8" stroke-width="1.6" />
<text x="783.0" y="1441.0" font-size="21.22" fill="#d6d4d0" textLength="43.2" lengthAdjust="spacingAndGlyphs">0,32</text>
<line x1="877.70" y1="1407.00" x2="877.70" y2="1416.50" stroke="#d8d8d8" stroke-width="1.6" />
<text x="856.1" y="1441.0" font-size="21.22" fill="#d6d4d0" textLength="43.2" lengthAdjust="spacingAndGlyphs">0,33</text>
<circle cx="733.4" cy="1220.6" r="6.8" fill="#1a1a1a" stroke="#111" stroke-width="1.2"/>
<circle cx="740.2" cy="1239.8" r="6.6" fill="#363636" stroke="#111" stroke-width="1.2"/>
<circle cx="750.5" cy="1237.4" r="6.6" fill="#505050" stroke="#111" stroke-width="1.2"/>
<circle cx="760.6" cy="1236.6" r="6.6" fill="#6a6a6a" stroke="#111" stroke-width="1.2"/>
<circle cx="757.6" cy="1240.6" r="6.6" fill="#858585" stroke="#111" stroke-width="1.2"/>
<circle cx="753.0" cy="1241.6" r="6.6" fill="#a0a0a0" stroke="#111" stroke-width="1.2"/>
<circle cx="755.6" cy="1241.8" r="6.6" fill="#bcbcbc" stroke="#111" stroke-width="1.2"/>
<circle cx="754.0" cy="1241.2" r="6.6" fill="#d6d6d6" stroke="#111" stroke-width="1.2"/>
<circle cx="755.8" cy="1240.6" r="6.6" fill="#ececec" stroke="#111" stroke-width="1.2"/>
<circle cx="755.2" cy="1239.8" r="6.0" fill="#ffffff" stroke="#111" stroke-width="1.2"/>
<rect x="743" y="1265.8" width="19.4" height="19.4" fill="#fff" stroke="#000" stroke-width="2.6"/>
<rect x="961.50" y="1107.00" width="1327.20" height="324.00" fill="#111" />
<rect x="963.00" y="1108.50" width="1324.20" height="43.70" fill="url(#gHead)" />
<text x="1240.3" y="1139.0" font-size="23.55" fill="#f4f4f4" textLength="13.0" lengthAdjust="spacingAndGlyphs">0</text>
<text x="1332.8" y="1139.0" font-size="23.55" fill="#f4f4f4" textLength="26.0" lengthAdjust="spacingAndGlyphs">10</text>
<text x="1431.7" y="1139.0" font-size="23.55" fill="#f4f4f4" textLength="26.0" lengthAdjust="spacingAndGlyphs">20</text>
<text x="1530.7" y="1139.0" font-size="23.55" fill="#f4f4f4" textLength="26.0" lengthAdjust="spacingAndGlyphs">30</text>
<text x="1629.6" y="1139.0" font-size="23.55" fill="#f4f4f4" textLength="26.0" lengthAdjust="spacingAndGlyphs">40</text>
<text x="1728.5" y="1139.0" font-size="23.55" fill="#f4f4f4" textLength="26.0" lengthAdjust="spacingAndGlyphs">50</text>
<text x="1827.5" y="1139.0" font-size="23.55" fill="#f4f4f4" textLength="26.0" lengthAdjust="spacingAndGlyphs">60</text>
<text x="1926.4" y="1139.0" font-size="23.55" fill="#f4f4f4" textLength="26.0" lengthAdjust="spacingAndGlyphs">70</text>
<text x="2025.4" y="1139.0" font-size="23.55" fill="#f4f4f4" textLength="26.0" lengthAdjust="spacingAndGlyphs">80</text>
<text x="2124.3" y="1139.0" font-size="23.55" fill="#f4f4f4" textLength="26.0" lengthAdjust="spacingAndGlyphs">90</text>
<text x="2216.8" y="1139.0" font-size="23.55" fill="#f4f4f4" textLength="39.0" lengthAdjust="spacingAndGlyphs">100</text>
<rect x="963.00" y="1152.20" width="1324.20" height="39.54" fill="#404040" />
<text x="982.2" y="1181.5" font-size="25.44" fill="#f4f4f4" font-weight="bold" textLength="92.1" lengthAdjust="spacingAndGlyphs">x: CIE31</text>
<text x="1202.8" y="1181.5" font-size="25.29" fill="#f4f4f4" textLength="47.6" lengthAdjust="spacingAndGlyphs">0,00</text>
<text x="1301.8" y="1181.5" font-size="25.29" fill="#f4f4f4" textLength="47.6" lengthAdjust="spacingAndGlyphs">0,31</text>
<text x="1400.7" y="1181.5" font-size="25.29" fill="#f4f4f4" textLength="47.6" lengthAdjust="spacingAndGlyphs">0,31</text>
<text x="1499.7" y="1181.5" font-size="25.29" fill="#f4f4f4" textLength="47.6" lengthAdjust="spacingAndGlyphs">0,31</text>
<text x="1598.6" y="1181.5" font-size="25.29" fill="#f4f4f4" textLength="47.6" lengthAdjust="spacingAndGlyphs">0,31</text>
<text x="1697.5" y="1181.5" font-size="25.29" fill="#f4f4f4" textLength="47.6" lengthAdjust="spacingAndGlyphs">0,31</text>
<text x="1796.5" y="1181.5" font-size="25.29" fill="#f4f4f4" textLength="47.6" lengthAdjust="spacingAndGlyphs">0,31</text>
<text x="1895.4" y="1181.5" font-size="25.29" fill="#f4f4f4" textLength="47.6" lengthAdjust="spacingAndGlyphs">0,31</text>
<text x="1994.4" y="1181.5" font-size="25.29" fill="#f4f4f4" textLength="47.6" lengthAdjust="spacingAndGlyphs">0,31</text>
<text x="2093.3" y="1181.5" font-size="25.29" fill="#f4f4f4" textLength="47.6" lengthAdjust="spacingAndGlyphs">0,31</text>
<text x="2192.3" y="1181.5" font-size="25.29" fill="#f4f4f4" textLength="47.6" lengthAdjust="spacingAndGlyphs">0,31</text>
<rect x="963.00" y="1191.74" width="1324.20" height="39.54" fill="#7e7e7e" />
<text x="982.2" y="1221.0" font-size="25.44" fill="#f4f4f4" font-weight="bold" textLength="92.1" lengthAdjust="spacingAndGlyphs">y: CIE31</text>
<text x="1202.8" y="1221.0" font-size="25.29" fill="#f4f4f4" textLength="47.6" lengthAdjust="spacingAndGlyphs">0,00</text>
<text x="1301.8" y="1221.0" font-size="25.29" fill="#f4f4f4" textLength="47.6" lengthAdjust="spacingAndGlyphs">0,34</text>
<text x="1400.7" y="1221.0" font-size="25.29" fill="#f4f4f4" textLength="47.6" lengthAdjust="spacingAndGlyphs">0,34</text>
<text x="1499.7" y="1221.0" font-size="25.29" fill="#f4f4f4" textLength="47.6" lengthAdjust="spacingAndGlyphs">0,34</text>
<text x="1598.6" y="1221.0" font-size="25.29" fill="#f4f4f4" textLength="47.6" lengthAdjust="spacingAndGlyphs">0,34</text>
<text x="1697.5" y="1221.0" font-size="25.29" fill="#f4f4f4" textLength="47.6" lengthAdjust="spacingAndGlyphs">0,34</text>
<text x="1796.5" y="1221.0" font-size="25.29" fill="#f4f4f4" textLength="47.6" lengthAdjust="spacingAndGlyphs">0,34</text>
<text x="1895.4" y="1221.0" font-size="25.29" fill="#f4f4f4" textLength="47.6" lengthAdjust="spacingAndGlyphs">0,34</text>
<text x="1994.4" y="1221.0" font-size="25.29" fill="#f4f4f4" textLength="47.6" lengthAdjust="spacingAndGlyphs">0,34</text>
<text x="2093.3" y="1221.0" font-size="25.29" fill="#f4f4f4" textLength="47.6" lengthAdjust="spacingAndGlyphs">0,34</text>
<text x="2192.3" y="1221.0" font-size="25.29" fill="#f4f4f4" textLength="47.6" lengthAdjust="spacingAndGlyphs">0,34</text>
<rect x="963.00" y="1231.29" width="1324.20" height="39.54" fill="#404040" />
<text x="982.2" y="1260.6" font-size="25.44" fill="#f4f4f4" font-weight="bold" textLength="15.1" lengthAdjust="spacingAndGlyphs">Y</text>
<text x="1202.8" y="1260.6" font-size="25.29" fill="#f4f4f4" textLength="47.6" lengthAdjust="spacingAndGlyphs">0,00</text>
<text x="1301.8" y="1260.6" font-size="25.29" fill="#f4f4f4" textLength="47.6" lengthAdjust="spacingAndGlyphs">3,50</text>
<text x="1400.7" y="1260.6" font-size="25.29" fill="#f4f4f4" textLength="61.5" lengthAdjust="spacingAndGlyphs">14,70</text>
<text x="1499.7" y="1260.6" font-size="25.29" fill="#f4f4f4" textLength="61.5" lengthAdjust="spacingAndGlyphs">34,75</text>
<text x="1598.6" y="1260.6" font-size="25.29" fill="#f4f4f4" textLength="61.5" lengthAdjust="spacingAndGlyphs">67,31</text>
<text x="1697.5" y="1260.6" font-size="25.29" fill="#f4f4f4" textLength="75.4" lengthAdjust="spacingAndGlyphs">110,81</text>
<text x="1796.5" y="1260.6" font-size="25.29" fill="#f4f4f4" textLength="75.4" lengthAdjust="spacingAndGlyphs">160,24</text>
<text x="1895.4" y="1260.6" font-size="25.29" fill="#f4f4f4" textLength="75.4" lengthAdjust="spacingAndGlyphs">220,99</text>
<text x="1994.4" y="1260.6" font-size="25.29" fill="#f4f4f4" textLength="75.4" lengthAdjust="spacingAndGlyphs">297,61</text>
<text x="2093.3" y="1260.6" font-size="25.29" fill="#f4f4f4" textLength="75.4" lengthAdjust="spacingAndGlyphs">387,43</text>
<text x="2192.3" y="1260.6" font-size="25.29" fill="#f4f4f4" textLength="75.4" lengthAdjust="spacingAndGlyphs">487,82</text>
<rect x="963.00" y="1270.83" width="1324.20" height="39.54" fill="#7e7e7e" />
<text x="982.2" y="1300.1" font-size="25.44" fill="#f4f4f4" font-weight="bold" textLength="97.6" lengthAdjust="spacingAndGlyphs">Target Y</text>
<text x="1202.8" y="1300.1" font-size="25.29" fill="#f4f4f4" textLength="47.6" lengthAdjust="spacingAndGlyphs">0,00</text>
<text x="1301.8" y="1300.1" font-size="25.29" fill="#f4f4f4" textLength="47.6" lengthAdjust="spacingAndGlyphs">5,04</text>
<text x="1400.7" y="1300.1" font-size="25.29" fill="#f4f4f4" textLength="61.5" lengthAdjust="spacingAndGlyphs">16,15</text>
<text x="1499.7" y="1300.1" font-size="25.29" fill="#f4f4f4" textLength="61.5" lengthAdjust="spacingAndGlyphs">35,26</text>
<text x="1598.6" y="1300.1" font-size="25.29" fill="#f4f4f4" textLength="61.5" lengthAdjust="spacingAndGlyphs">64,82</text>
<text x="1697.5" y="1300.1" font-size="25.29" fill="#f4f4f4" textLength="75.4" lengthAdjust="spacingAndGlyphs">105,30</text>
<text x="1796.5" y="1300.1" font-size="25.29" fill="#f4f4f4" textLength="75.4" lengthAdjust="spacingAndGlyphs">155,40</text>
<text x="1895.4" y="1300.1" font-size="25.29" fill="#f4f4f4" textLength="75.4" lengthAdjust="spacingAndGlyphs">217,18</text>
<text x="1994.4" y="1300.1" font-size="25.29" fill="#f4f4f4" textLength="75.4" lengthAdjust="spacingAndGlyphs">294,56</text>
<text x="2093.3" y="1300.1" font-size="25.29" fill="#f4f4f4" textLength="75.4" lengthAdjust="spacingAndGlyphs">386,01</text>
<text x="2192.3" y="1300.1" font-size="25.29" fill="#f4f4f4" textLength="75.4" lengthAdjust="spacingAndGlyphs">487,82</text>
<rect x="963.00" y="1310.37" width="1324.20" height="39.54" fill="#404040" />
<text x="982.2" y="1339.7" font-size="25.44" fill="#f4f4f4" font-weight="bold" textLength="198.6" lengthAdjust="spacingAndGlyphs">Gamma Log/Log</text>
<text x="1202.8" y="1339.7" font-size="25.29" fill="#f4f4f4" textLength="47.6" lengthAdjust="spacingAndGlyphs">1,28</text>
<text x="1301.8" y="1339.7" font-size="25.29" fill="#f4f4f4" textLength="47.6" lengthAdjust="spacingAndGlyphs">2,16</text>
<text x="1400.7" y="1339.7" font-size="25.29" fill="#f4f4f4" textLength="47.6" lengthAdjust="spacingAndGlyphs">2,18</text>
<text x="1499.7" y="1339.7" font-size="25.29" fill="#f4f4f4" textLength="47.6" lengthAdjust="spacingAndGlyphs">2,18</text>
<text x="1598.6" y="1339.7" font-size="25.29" fill="#f4f4f4" textLength="47.6" lengthAdjust="spacingAndGlyphs">2,16</text>
<text x="1697.5" y="1339.7" font-size="25.29" fill="#f4f4f4" textLength="47.6" lengthAdjust="spacingAndGlyphs">2,15</text>
<text x="1796.5" y="1339.7" font-size="25.29" fill="#f4f4f4" textLength="47.6" lengthAdjust="spacingAndGlyphs">2,18</text>
<text x="1895.4" y="1339.7" font-size="25.29" fill="#f4f4f4" textLength="47.6" lengthAdjust="spacingAndGlyphs">2,20</text>
<text x="1994.4" y="1339.7" font-size="25.29" fill="#f4f4f4" textLength="47.6" lengthAdjust="spacingAndGlyphs">2,21</text>
<text x="2093.3" y="1339.7" font-size="25.29" fill="#f4f4f4" textLength="47.6" lengthAdjust="spacingAndGlyphs">2,23</text>
<text x="2192.3" y="1339.7" font-size="25.29" fill="#f4f4f4" textLength="47.6" lengthAdjust="spacingAndGlyphs">2,27</text>
<rect x="963.00" y="1349.91" width="1324.20" height="39.54" fill="#7e7e7e" />
<text x="982.2" y="1379.2" font-size="25.44" fill="#f4f4f4" font-weight="bold" textLength="45.6" lengthAdjust="spacingAndGlyphs">CCT</text>
<text x="1202.8" y="1379.2" font-size="25.29" fill="#f4f4f4" textLength="89.3" lengthAdjust="spacingAndGlyphs">2315,00</text>
<text x="1301.8" y="1379.2" font-size="25.29" fill="#f4f4f4" textLength="89.3" lengthAdjust="spacingAndGlyphs">6560,00</text>
<text x="1400.7" y="1379.2" font-size="25.29" fill="#f4f4f4" textLength="89.3" lengthAdjust="spacingAndGlyphs">6539,00</text>
<text x="1499.7" y="1379.2" font-size="25.29" fill="#f4f4f4" textLength="89.3" lengthAdjust="spacingAndGlyphs">6468,00</text>
<text x="1598.6" y="1379.2" font-size="25.29" fill="#f4f4f4" textLength="89.3" lengthAdjust="spacingAndGlyphs">6397,00</text>
<text x="1697.5" y="1379.2" font-size="25.29" fill="#f4f4f4" textLength="89.3" lengthAdjust="spacingAndGlyphs">6397,00</text>
<text x="1796.5" y="1379.2" font-size="25.29" fill="#f4f4f4" textLength="89.3" lengthAdjust="spacingAndGlyphs">6433,00</text>
<text x="1895.4" y="1379.2" font-size="25.29" fill="#f4f4f4" textLength="89.3" lengthAdjust="spacingAndGlyphs">6453,00</text>
<text x="1994.4" y="1379.2" font-size="25.29" fill="#f4f4f4" textLength="89.3" lengthAdjust="spacingAndGlyphs">6452,00</text>
<text x="2093.3" y="1379.2" font-size="25.29" fill="#f4f4f4" textLength="89.3" lengthAdjust="spacingAndGlyphs">6456,00</text>
<text x="2192.3" y="1379.2" font-size="25.29" fill="#f4f4f4" textLength="89.3" lengthAdjust="spacingAndGlyphs">6435,00</text>
<rect x="963.00" y="1389.46" width="1324.20" height="39.54" fill="#404040" />
<text x="982.2" y="1418.8" font-size="25.44" fill="#f4f4f4" font-weight="bold" textLength="96.1" lengthAdjust="spacingAndGlyphs">ΔE 2000</text>
<text x="1202.8" y="1418.8" font-size="25.29" fill="#f4f4f4" textLength="47.6" lengthAdjust="spacingAndGlyphs">0,00</text>
<text x="1301.8" y="1418.8" font-size="25.29" fill="#f4f4f4" textLength="47.6" lengthAdjust="spacingAndGlyphs">2,34</text>
<text x="1400.7" y="1418.8" font-size="25.29" fill="#f4f4f4" textLength="47.6" lengthAdjust="spacingAndGlyphs">2,14</text>
<text x="1499.7" y="1418.8" font-size="25.29" fill="#f4f4f4" textLength="47.6" lengthAdjust="spacingAndGlyphs">2,44</text>
<text x="1598.6" y="1418.8" font-size="25.29" fill="#f4f4f4" textLength="47.6" lengthAdjust="spacingAndGlyphs">2,82</text>
<text x="1697.5" y="1418.8" font-size="25.29" fill="#f4f4f4" textLength="47.6" lengthAdjust="spacingAndGlyphs">3,12</text>
<text x="1796.5" y="1418.8" font-size="25.29" fill="#f4f4f4" textLength="47.6" lengthAdjust="spacingAndGlyphs">3,29</text>
<text x="1895.4" y="1418.8" font-size="25.29" fill="#f4f4f4" textLength="47.6" lengthAdjust="spacingAndGlyphs">3,69</text>
<text x="1994.4" y="1418.8" font-size="25.29" fill="#f4f4f4" textLength="47.6" lengthAdjust="spacingAndGlyphs">4,06</text>
<text x="2093.3" y="1418.8" font-size="25.29" fill="#f4f4f4" textLength="47.6" lengthAdjust="spacingAndGlyphs">4,37</text>
<text x="2192.3" y="1418.8" font-size="25.29" fill="#f4f4f4" textLength="47.6" lengthAdjust="spacingAndGlyphs">4,84</text>
<rect x="1.40" y="1526.3" width="181.6" height="100.2" rx="6.7" fill="url(#gFoot)"/>
<rect x="10.00" y="1534.2" width="164.6" height="59.4" rx="5.5" fill="#000000"/>
<text x="87.5" y="1619.2" font-size="17.44" fill="#2e2e2e" font-weight="bold" textLength="9.5" lengthAdjust="spacingAndGlyphs">0</text>
<rect x="185.65" y="1526.3" width="181.6" height="100.2" rx="6.7" fill="url(#gFoot)"/>
<rect x="194.25" y="1534.2" width="164.6" height="59.4" rx="5.5" fill="#1a1a1a"/>
<text x="266.9" y="1619.2" font-size="17.44" fill="#2e2e2e" font-weight="bold" textLength="19.0" lengthAdjust="spacingAndGlyphs">10</text>
<rect x="369.90" y="1526.3" width="181.6" height="100.2" rx="6.7" fill="url(#gFoot)"/>
<rect x="378.50" y="1534.2" width="164.6" height="59.4" rx="5.5" fill="#363636"/>
<text x="451.2" y="1619.2" font-size="17.44" fill="#2e2e2e" font-weight="bold" textLength="19.0" lengthAdjust="spacingAndGlyphs">20</text>
<rect x="554.15" y="1526.3" width="181.6" height="100.2" rx="6.7" fill="url(#gFoot)"/>
<rect x="562.75" y="1534.2" width="164.6" height="59.4" rx="5.5" fill="#4f4f4f"/>
<text x="635.4" y="1619.2" font-size="17.44" fill="#2e2e2e" font-weight="bold" textLength="19.0" lengthAdjust="spacingAndGlyphs">30</text>
<rect x="738.40" y="1526.3" width="181.6" height="100.2" rx="6.7" fill="url(#gFoot)"/>
<rect x="747.00" y="1534.2" width="164.6" height="59.4" rx="5.5" fill="#696969"/>
<text x="819.7" y="1619.2" font-size="17.44" fill="#2e2e2e" font-weight="bold" textLength="19.0" lengthAdjust="spacingAndGlyphs">40</text>
<rect x="922.65" y="1526.3" width="181.6" height="100.2" rx="6.7" fill="url(#gFoot)"/>
<rect x="931.25" y="1534.2" width="164.6" height="59.4" rx="5.5" fill="#828282"/>
<text x="1003.9" y="1619.2" font-size="17.44" fill="#2e2e2e" font-weight="bold" textLength="19.0" lengthAdjust="spacingAndGlyphs">50</text>
<rect x="1106.90" y="1526.3" width="181.6" height="100.2" rx="6.7" fill="url(#gFoot)"/>
<rect x="1115.50" y="1534.2" width="164.6" height="59.4" rx="5.5" fill="#9b9b9b"/>
<text x="1188.2" y="1619.2" font-size="17.44" fill="#2e2e2e" font-weight="bold" textLength="19.0" lengthAdjust="spacingAndGlyphs">60</text>
<rect x="1291.15" y="1526.3" width="181.6" height="100.2" rx="6.7" fill="url(#gFoot)"/>
<rect x="1299.75" y="1534.2" width="164.6" height="59.4" rx="5.5" fill="#b5b5b5"/>
<text x="1372.5" y="1619.2" font-size="17.44" fill="#2e2e2e" font-weight="bold" textLength="19.0" lengthAdjust="spacingAndGlyphs">70</text>
<rect x="1475.40" y="1526.3" width="181.6" height="100.2" rx="6.7" fill="url(#gFoot)"/>
<rect x="1484.00" y="1534.2" width="164.6" height="59.4" rx="5.5" fill="#cecece"/>
<text x="1556.7" y="1619.2" font-size="17.44" fill="#2e2e2e" font-weight="bold" textLength="19.0" lengthAdjust="spacingAndGlyphs">80</text>
<rect x="1659.65" y="1526.3" width="181.6" height="100.2" rx="6.7" fill="url(#gFoot)"/>
<rect x="1668.25" y="1534.2" width="164.6" height="59.4" rx="5.5" fill="#e6e6e6"/>
<text x="1741.0" y="1619.2" font-size="17.44" fill="#2e2e2e" font-weight="bold" textLength="19.0" lengthAdjust="spacingAndGlyphs">90</text>
<rect x="1843.90" y="1526.3" width="181.6" height="100.2" rx="6.7" fill="url(#gFootSel)"/>
<rect x="1852.50" y="1534.2" width="164.6" height="59.4" rx="5.5" fill="#ffffff"/>
<text x="1920.5" y="1619.2" font-size="17.44" fill="#ffffff" font-weight="bold" textLength="28.5" lengthAdjust="spacingAndGlyphs">100</text>
<path d="M2030 1556 V1533 Q2030 1526.3 2036.7 1526.3 H2102.3 Q2109 1526.3 2109 1533 V1556 Z" fill="url(#gLP1)"/>
<rect x="2030" y="1557.5" width="79" height="72" fill="url(#gLP2)"/>
<line x1="2030.00" y1="1556.70" x2="2109.00" y2="1556.70" stroke="#474747" stroke-width="1.6" />
<circle cx="2069.3" cy="1540.4" r="12" fill="url(#gToolC)"/>
<path d="M2062 1543.8 L2069.3 1537 L2076.6 1543.8 Z" fill="#333"/>
<rect x="2045" y="1567.5" width="47.5" height="47" rx="6" fill="#aaaaaa" stroke="#2c2c2c" stroke-width="3.2"/>
<rect x="2058" y="1580.6" width="22.6" height="22.4" fill="#050505"/>
<rect x="2110.2" y="1526.3" width="371.25" height="49.6" fill="url(#gTool)"/>
<rect x="2481.50" y="1526.30" width="80.00" height="49.60" fill="#3a3a3a" />
<circle cx="2520" cy="1550.4" r="16.5" fill="#2f2f2f"/>
<circle cx="2147.60" cy="1550.8" r="16" fill="url(#gToolC)"/>
<line x1="2184.45" y1="1526.30" x2="2184.45" y2="1575.90" stroke="#4c4c4c" stroke-width="1.6" />
<circle cx="2221.85" cy="1550.8" r="16" fill="url(#gToolC)"/>
<line x1="2258.70" y1="1526.30" x2="2258.70" y2="1575.90" stroke="#4c4c4c" stroke-width="1.6" />
<circle cx="2296.10" cy="1550.8" r="16" fill="url(#gToolC)"/>
<line x1="2332.95" y1="1526.30" x2="2332.95" y2="1575.90" stroke="#4c4c4c" stroke-width="1.6" />
<circle cx="2370.35" cy="1550.8" r="16" fill="url(#gToolC)"/>
<line x1="2407.20" y1="1526.30" x2="2407.20" y2="1575.90" stroke="#4c4c4c" stroke-width="1.6" />
<circle cx="2444.60" cy="1550.8" r="16" fill="url(#gToolC)"/>
<rect x="2141.00" y="1544.2" width="13.2" height="13.2" fill="#343434"/>
<path d="M2215.85 1543.4 L2229.25 1551.2 L2215.85 1559 Z" fill="#343434"/>
<path d="M2290.70 1544 H2287.10 V1558.4 H2290.70 M2301.50 1544 H2305.10 V1558.4 H2301.50" fill="none" stroke="#343434" stroke-width="2.4"/>
<circle cx="2293.50" cy="1549.6" r="1.3" fill="#343434"/><circle cx="2298.70" cy="1549.6" r="1.3" fill="#343434"/>
<path d="M2370.35 1550.8 C2367.35 1546 2360.35 1545.6 2360.35 1550.8 C2360.35 1556 2367.35 1555.6 2370.35 1550.8 C2373.35 1546 2380.35 1545.6 2380.35 1550.8 C2380.35 1556 2373.35 1555.6 2370.35 1550.8 Z" fill="none" stroke="#343434" stroke-width="2.6"/>
<g fill="none" stroke="#343434" stroke-width="3"><path d="M2436.60 1550 A8 8 0 0 1 2449.60 1545.6"/><path d="M2452.60 1553 A8 8 0 0 1 2439.60 1557.4"/></g>
<path d="M2446.10 1541.6 L2454.20 1543.4 L2449.00 1550 Z" fill="#343434"/><path d="M2443.10 1561.4 L2435.00 1559.6 L2440.20 1553 Z" fill="#343434"/>
<path d="M2110.2 1630 V1583 Q2110.2 1577.4 2116 1577.4 H2550 Q2556 1577.4 2556 1583 V1630 Z" fill="url(#gNav)"/>
<line x1="2334.00" y1="1577.40" x2="2334.00" y2="1630.00" stroke="#4c4c4c" stroke-width="1.6" />
<circle cx="2160.8" cy="1601.6" r="16" fill="url(#gToolC)"/>
<circle cx="2511" cy="1601.6" r="16" fill="url(#gToolC)"/>
<path d="M2159.4 1594.4 L2153.4 1601.6 L2159.4 1608.8 M2167 1594.4 L2161 1601.6 L2167 1608.8" fill="none" stroke="#343434" stroke-width="2.4"/>
<path d="M2504.8 1594.4 L2510.8 1601.6 L2504.8 1608.8 M2512.4 1594.4 L2518.4 1601.6 L2512.4 1608.8" fill="none" stroke="#343434" stroke-width="2.4"/>
<text x="2204.0" y="1614.4" font-size="35.76" fill="#3a3a3a" textLength="85.0" lengthAdjust="spacingAndGlyphs" stroke="#3a3a3a" stroke-width="0.6" filter="url(#fSoft)">Back</text>
<text x="2378.6" y="1614.4" font-size="35.76" fill="#3a3a3a" textLength="87.5" lengthAdjust="spacingAndGlyphs" stroke="#3a3a3a" stroke-width="0.6" filter="url(#fSoft)">Next</text>
<rect x="2549.00" y="94.00" width="11.00" height="1534.00" fill="url(#gEdge)" />
<rect x="0.00" y="146.50" width="2.60" height="747.00" fill="url(#gEdgeL)" />
<rect x="0.00" y="1094.50" width="2.60" height="431.00" fill="url(#gEdgeL)" />
</svg>
</div>
</body>
</html>
